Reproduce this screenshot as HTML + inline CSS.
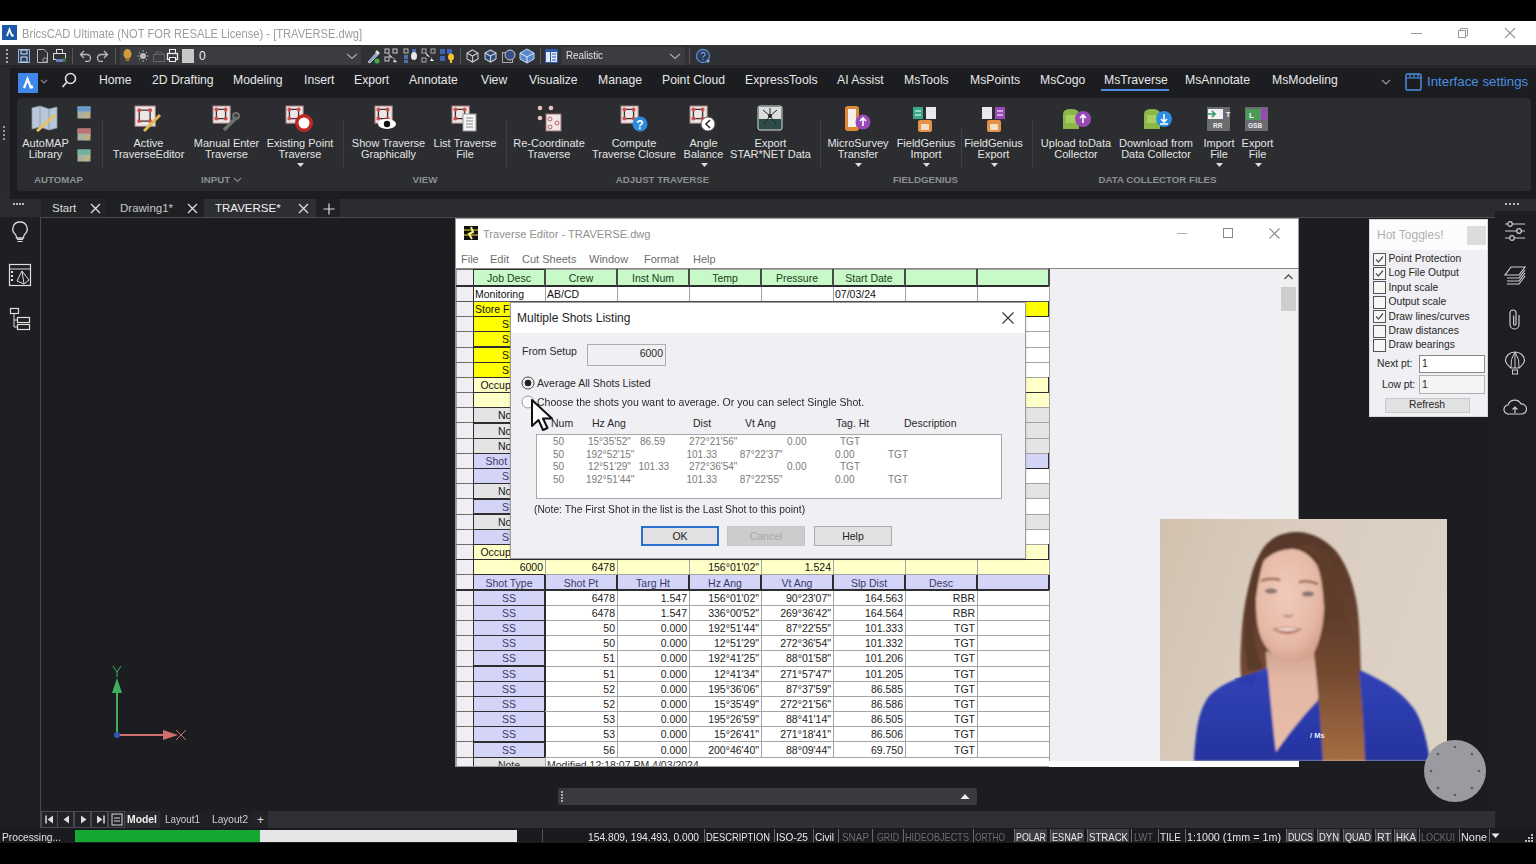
<!DOCTYPE html><html><head><meta charset="utf-8"><style>
*{margin:0;padding:0;box-sizing:border-box}
html,body{width:1536px;height:864px;overflow:hidden;background:#000;font-family:"Liberation Sans",sans-serif}
body>div,body>span,body>svg{position:absolute}
span{position:absolute;white-space:nowrap;line-height:1}
.g div,.g span{position:absolute}
</style></head><body><div style="left:0px;top:21px;width:1536px;height:24px;background:#ffffff;"></div>
<svg style="left:2px;top:25px" width="15" height="15" viewBox="0 0 15 15"><rect width="15" height="15" fill="#1b5aa6"/><path d="M5 11 L7.5 4.5 L10 11" stroke="#fff" stroke-width="1.8" fill="none"/><circle cx="10.5" cy="10.5" r="1.3" fill="#fff"/></svg>
<span style="left:22px;top:27.9px;font-size:12.3px;color:#9c9c9c;transform:scaleX(0.906);transform-origin:0 0;">BricsCAD Ultimate (NOT FOR RESALE License) - [TRAVERSE.dwg]</span>
<div style="left:1411px;top:33px;width:11px;height:1px;background:#999;"></div>
<svg style="left:1457px;top:27px" width="12" height="12" viewBox="0 0 12 12"><rect x="1.5" y="3.5" width="7" height="7" fill="none" stroke="#999"/><path d="M3.5 3.5 V1.5 H10.5 V8.5 H8.5" fill="none" stroke="#999"/></svg>
<svg style="left:1504px;top:27px" width="12" height="12" viewBox="0 0 12 12"><path d="M1 1 L11 11 M11 1 L1 11" stroke="#999" stroke-width="1.1"/></svg>
<div style="left:0px;top:45px;width:1536px;height:21px;background:#303134;"></div>
<div style="left:0px;top:65px;width:1536px;height:3px;background:#26272a;"></div>
<div style="left:6px;top:49px;width:2px;height:2px;background:#aaa;"></div>
<div style="left:6px;top:53px;width:2px;height:2px;background:#aaa;"></div>
<div style="left:6px;top:57px;width:2px;height:2px;background:#aaa;"></div>
<div style="left:6px;top:61px;width:2px;height:2px;background:#aaa;"></div>
<svg style="left:17px;top:48px" width="14" height="16" viewBox="0 0 14 16"><rect x="1.5" y="1.5" width="11" height="13" fill="#2a3f66" stroke="#8fb0e0"/><rect x="4" y="2" width="6" height="4" fill="none" stroke="#ddd"/><rect x="4" y="9" width="6" height="5" fill="none" stroke="#ddd"/></svg>
<svg style="left:36px;top:48px" width="13" height="16" viewBox="0 0 13 16"><path d="M1.5 1.5 H8 L11.5 5 V14.5 H1.5 Z" fill="none" stroke="#bbb"/><circle cx="9" cy="12" r="2.2" fill="none" stroke="#aaa"/></svg>
<svg style="left:52px;top:48px" width="15" height="16" viewBox="0 0 15 16"><rect x="4.5" y="1.5" width="6" height="4" fill="none" stroke="#ddd"/><rect x="1.5" y="5.5" width="12" height="6" fill="#333" stroke="#ddd"/><rect x="4" y="11" width="7" height="3" fill="#6a7fc0"/><rect x="11" y="10" width="3" height="4" fill="#3c6e3c"/></svg>
<div style="left:72px;top:48px;width:1px;height:16px;background:#555;"></div>
<svg style="left:79px;top:48px" width="13" height="14" viewBox="0 0 13 14"><path d="M5 3 L1.5 6.5 L5 10 M1.5 6.5 H8 A3.5 3.5 0 0 1 8 13.5 H6" fill="none" stroke="#bbb" stroke-width="1.3"/></svg>
<svg style="left:96px;top:48px" width="13" height="14" viewBox="0 0 13 14"><path d="M8 3 L11.5 6.5 L8 10 M11.5 6.5 H5 A3.5 3.5 0 0 0 5 13.5 H7" fill="none" stroke="#bbb" stroke-width="1.3"/></svg>
<div style="left:115px;top:48px;width:1px;height:16px;background:#555;"></div>
<div style="left:120px;top:47px;width:241px;height:18px;background:#3b3c40;"></div>
<svg style="left:121px;top:48px" width="13" height="16" viewBox="0 0 13 16"><ellipse cx="6.5" cy="6" rx="4" ry="5" fill="#d29a3c"/><rect x="4.5" y="10" width="4" height="3" fill="#a07030"/></svg>
<svg style="left:137px;top:48px" width="12" height="16" viewBox="0 0 12 16"><circle cx="6" cy="8" r="3" fill="#bbb"/><path d="M6 2 V4 M6 12 V14 M0.5 8 H2.5 M9.5 8 H11.5 M2 4 L3.3 5.3 M10 4 L8.7 5.3 M2 12 L3.3 10.7 M10 12 L8.7 10.7" stroke="#aaa"/></svg>
<svg style="left:152px;top:49px" width="14" height="14" viewBox="0 0 14 14"><rect x="1.5" y="5.5" width="11" height="7" fill="none" stroke="#666"/><path d="M4 5.5 V3 H10 V5.5" fill="none" stroke="#666"/></svg>
<svg style="left:166px;top:48px" width="13" height="16" viewBox="0 0 13 16"><rect x="3.5" y="1.5" width="6" height="4" fill="none" stroke="#eee"/><rect x="1.5" y="5.5" width="10" height="6" fill="none" stroke="#eee" stroke-width="1.3"/><rect x="3.5" y="9.5" width="6" height="4" fill="#303134" stroke="#eee"/></svg>
<div style="left:182px;top:49px;width:12px;height:14px;background:#c8c8c8;"></div>
<span style="left:199px;top:50.0px;font-size:12px;color:#eee;">0</span>
<svg style="left:346px;top:51px" width="12" height="10" viewBox="0 0 12 10"><path d="M1 3 L6 7.5 L11 3" fill="none" stroke="#aaa" stroke-width="1.2"/></svg>
<svg style="left:366px;top:48px" width="15" height="16" viewBox="0 0 15 16"><path d="M2 14 L10 5 L12 7 L4 15 Z" fill="#8a9ed8" stroke="#ccc" stroke-width="0.8"/><path d="M10 3 L13 6" stroke="#ddd" stroke-width="2.5"/><circle cx="11" cy="13" r="2.5" fill="#3fae4a"/></svg>
<svg style="left:384px;top:48px" width="15" height="16" viewBox="0 0 15 16"><rect x="1" y="1" width="4" height="4" fill="none" stroke="#ccc"/><rect x="9" y="1" width="4" height="4" fill="none" stroke="#ccc"/><path d="M4 5 L13 14 L9 14 L11 11 L6 9 Z" fill="#fff" stroke="#999" stroke-width="0.6"/><rect x="1" y="9" width="4" height="4" fill="none" stroke="#ccc"/></svg>
<svg style="left:403px;top:48px" width="15" height="16" viewBox="0 0 15 16"><rect x="1" y="1" width="4" height="4" fill="none" stroke="#bbb"/><rect x="1" y="7" width="4" height="4" fill="#4a6fb8"/><rect x="1" y="12" width="4" height="3" fill="#4a6fb8"/><ellipse cx="11" cy="8" rx="3" ry="4" fill="#e8e8e8"/><rect x="9" y="1" width="4" height="3" fill="#4a6fb8"/></svg>
<svg style="left:421px;top:48px" width="15" height="16" viewBox="0 0 15 16"><rect x="1" y="1" width="4" height="4" fill="none" stroke="#aaa"/><rect x="1" y="10" width="4" height="4" fill="none" stroke="#aaa"/><rect x="10" y="1" width="4" height="4" fill="none" stroke="#aaa"/><path d="M4 4 L13 13 L9 13 L11 10 L6 8 Z" fill="#fff"/></svg>
<svg style="left:439px;top:48px" width="16" height="16" viewBox="0 0 16 16"><rect x="1" y="1" width="5" height="5" fill="#3f66b5"/><rect x="1" y="8" width="5" height="5" fill="#3f66b5"/><rect x="8" y="1" width="5" height="5" fill="#3f66b5"/><ellipse cx="12" cy="9" rx="3" ry="3.5" fill="#f5c030"/><rect x="11" y="12" width="2" height="3" fill="#f5c030"/></svg>
<div style="left:460px;top:48px;width:1px;height:16px;background:#555;"></div>
<svg style="left:465px;top:48px" width="15" height="16" viewBox="0 0 15 16"><path d="M7.5 2 L13 5 V11 L7.5 14 L2 11 V5 Z M2 5 L7.5 8 L13 5 M7.5 8 V14" fill="none" stroke="#ccc" stroke-width="1.1"/></svg>
<svg style="left:483px;top:48px" width="15" height="16" viewBox="0 0 15 16"><path d="M7.5 2 L13 5 V11 L7.5 14 L2 11 V5 Z" fill="#2f4a80" stroke="#ccc" stroke-width="1.1"/><path d="M2 5 L7.5 8 L13 5 M7.5 8 V14" fill="none" stroke="#ccc" stroke-width="1.1"/></svg>
<svg style="left:501px;top:48px" width="16" height="16" viewBox="0 0 16 16"><rect x="1.5" y="4.5" width="10" height="10" fill="none" stroke="#aaa"/><circle cx="9" cy="7" r="5" fill="#36508a" stroke="#ccc"/></svg>
<svg style="left:519px;top:48px" width="16" height="16" viewBox="0 0 16 16"><path d="M8 1 L15 5 V11 L8 15 L1 11 V5 Z" fill="#5a86cc" stroke="#c8d8f0"/><path d="M1 5 L8 9 L15 5 M8 9 V15" fill="none" stroke="#e0e8ff"/></svg>
<div style="left:540px;top:48px;width:1px;height:16px;background:#555;"></div>
<svg style="left:544px;top:48px" width="15" height="16" viewBox="0 0 15 16"><rect x="1" y="1" width="13" height="14" fill="#2c5aa8"/><rect x="2" y="4" width="4" height="10" fill="#dfe8f5"/><rect x="7" y="4" width="6" height="10" fill="#dfe8f5"/><path d="M8 6 H12 M8 9 H12 M8 12 H12" stroke="#2c5aa8"/></svg>
<div style="left:562px;top:47px;width:123px;height:18px;background:#3b3c40;"></div>
<span style="left:566px;top:50.2px;font-size:11.5px;color:#e0e0e0;transform:scaleX(0.851);transform-origin:0 0;">Realistic</span>
<svg style="left:669px;top:51px" width="12" height="10" viewBox="0 0 12 10"><path d="M1 3 L6 7.5 L11 3" fill="none" stroke="#aaa" stroke-width="1.2"/></svg>
<div style="left:689px;top:48px;width:1px;height:16px;background:#555;"></div>
<svg style="left:695px;top:48px" width="16" height="16" viewBox="0 0 16 16"><circle cx="8" cy="8" r="6.5" fill="#2a3a5a" stroke="#5a8ad0" stroke-width="1.3"/><text x="8" y="12" font-size="10" text-anchor="middle" fill="#8ab0e8" font-family="Liberation Sans">?</text><circle cx="13" cy="13" r="1.6" fill="#8ab0e8"/></svg>
<div style="left:0px;top:68px;width:1536px;height:30px;background:#1c1d20;"></div>
<div style="left:0px;top:68px;width:10px;height:30px;background:#2a2b2e;"></div>
<svg style="left:18px;top:73px" width="20" height="20" viewBox="0 0 20 20"><rect width="20" height="20" fill="#3f87e8"/><path d="M6 15 L9.5 6 L13 15" stroke="#fff" stroke-width="2.2" fill="none"/><circle cx="13.5" cy="14" r="1.8" fill="#fff"/></svg>
<svg style="left:40px;top:79px" width="8" height="6" viewBox="0 0 8 6"><path d="M1 1 L4 4 L7 1" fill="none" stroke="#888" stroke-width="1.1"/></svg>
<svg style="left:61px;top:72px" width="16" height="17" viewBox="0 0 16 17"><circle cx="9.5" cy="6.5" r="5" fill="none" stroke="#ddd" stroke-width="1.6"/><path d="M6 10 L1.5 15" stroke="#ddd" stroke-width="1.8"/></svg>
<span style="left:99px;top:73.9px;font-size:12.2px;color:#e6e6e6;">Home</span>
<span style="left:152px;top:73.9px;font-size:12.2px;color:#e6e6e6;">2D Drafting</span>
<span style="left:233px;top:73.9px;font-size:12.2px;color:#e6e6e6;">Modeling</span>
<span style="left:304px;top:73.9px;font-size:12.2px;color:#e6e6e6;">Insert</span>
<span style="left:354px;top:73.9px;font-size:12.2px;color:#e6e6e6;">Export</span>
<span style="left:409px;top:73.9px;font-size:12.2px;color:#e6e6e6;">Annotate</span>
<span style="left:481px;top:73.9px;font-size:12.2px;color:#e6e6e6;">View</span>
<span style="left:529px;top:73.9px;font-size:12.2px;color:#e6e6e6;">Visualize</span>
<span style="left:598px;top:73.9px;font-size:12.2px;color:#e6e6e6;">Manage</span>
<span style="left:662px;top:73.9px;font-size:12.2px;color:#e6e6e6;">Point Cloud</span>
<span style="left:745px;top:73.9px;font-size:12.2px;color:#e6e6e6;">ExpressTools</span>
<span style="left:837px;top:73.9px;font-size:12.2px;color:#e6e6e6;">AI Assist</span>
<span style="left:904px;top:73.9px;font-size:12.2px;color:#e6e6e6;">MsTools</span>
<span style="left:970px;top:73.9px;font-size:12.2px;color:#e6e6e6;">MsPoints</span>
<span style="left:1040px;top:73.9px;font-size:12.2px;color:#e6e6e6;">MsCogo</span>
<span style="left:1104px;top:73.9px;font-size:12.2px;color:#e6e6e6;">MsTraverse</span>
<span style="left:1185px;top:73.9px;font-size:12.2px;color:#e6e6e6;">MsAnnotate</span>
<span style="left:1272px;top:73.9px;font-size:12.2px;color:#e6e6e6;">MsModeling</span>
<div style="left:1101px;top:89px;width:68px;height:2px;background:#4a90e2;"></div>
<svg style="left:1381px;top:79px" width="10" height="7" viewBox="0 0 10 7"><path d="M1 1 L5 5 L9 1" fill="none" stroke="#999" stroke-width="1.2"/></svg>
<svg style="left:1405px;top:73px" width="17" height="18" viewBox="0 0 17 18"><rect x="1" y="1" width="15" height="16" rx="1.5" fill="none" stroke="#4a8fe0" stroke-width="1.5"/><path d="M1 5 H16 M5 1 V5 M9 1 V5 M13 1 V5" stroke="#4a8fe0" stroke-width="1.2"/></svg>
<span style="left:1427px;top:75.3px;font-size:13.3px;color:#4a8fe0;">Interface settings</span>
<div style="left:0px;top:98px;width:1536px;height:102px;background:#1c1d20;"></div>
<div style="left:0px;top:98px;width:10px;height:102px;background:#2a2b2e;"></div>
<div style="left:3px;top:126px;width:2px;height:2px;background:#999;"></div>
<div style="left:3px;top:130px;width:2px;height:2px;background:#999;"></div>
<div style="left:3px;top:134px;width:2px;height:2px;background:#999;"></div>
<div style="left:3px;top:138px;width:2px;height:2px;background:#999;"></div>
<div style="left:17px;top:98px;width:1514px;height:93px;background:#2b2d30;border-radius:4px;"></div>
<svg style="left:31px;top:105px" width="28" height="27" viewBox="0 0 28 27"><path d="M1 3 L9 1 L18 4 L26 2 V23 L18 25 L9 22 L1 24 Z" fill="#b8c8d8" stroke="#8898a8" stroke-width="0.8"/><path d="M9 1 V22 M18 4 V25" stroke="#8aa0b8"/><path d="M6 26 L24 10" stroke="#e8c060" stroke-width="3"/></svg>
<span style="left:-154.5px;width:400px;text-align:center;top:137.5px;font-size:11px;color:#e4e4e4;">AutoMAP</span>
<span style="left:-154.5px;width:400px;text-align:center;top:148.5px;font-size:11px;color:#e4e4e4;">Library</span>
<svg style="left:77px;top:106px" width="14" height="13" viewBox="0 0 14 13"><rect x="0.5" y="0.5" width="13" height="12" fill="#a8b0a0"/><rect x="0.5" y="0.5" width="13" height="5" fill="#6a9ad0"/><path d="M8 12 L13 7" stroke="#d8b060" stroke-width="2"/></svg>
<svg style="left:77px;top:128px" width="14" height="13" viewBox="0 0 14 13"><rect x="0.5" y="0.5" width="13" height="12" fill="#a8b0a0"/><rect x="0.5" y="0.5" width="13" height="5" fill="#c07070"/><path d="M8 12 L13 7" stroke="#d8b060" stroke-width="2"/></svg>
<svg style="left:77px;top:149px" width="14" height="13" viewBox="0 0 14 13"><rect x="0.5" y="0.5" width="13" height="12" fill="#a8b0a0"/><rect x="0.5" y="0.5" width="13" height="5" fill="#70b0a0"/><path d="M8 12 L13 7" stroke="#d8b060" stroke-width="2"/></svg>
<div style="left:102px;top:120px;width:1px;height:48px;background:#3d3f43;"></div>
<svg style="left:134px;top:105px" width="28" height="28" viewBox="0 0 28 28"><rect x="1" y="1" width="20.3" height="20.3" fill="#ece6e6" stroke="#a98080" stroke-width="1"/><rect x="5.2" y="5.2" width="10.9" height="10.9" rx="2" fill="none" stroke="#3a3030" stroke-width="1.3"/><circle cx="5.2" cy="5.2" r="2" fill="#d05050"/><circle cx="16.1" cy="5.2" r="2" fill="#d05050"/><circle cx="5.2" cy="16.1" r="2" fill="#d05050"/><circle cx="16.1" cy="16.1" r="2" fill="#d05050"/><path d="M10 26 L26 10" stroke="#e0b850" stroke-width="3"/></svg>
<span style="left:-51.5px;width:400px;text-align:center;top:137.5px;font-size:11px;color:#e4e4e4;">Active</span>
<span style="left:-51.5px;width:400px;text-align:center;top:148.5px;font-size:11px;color:#e4e4e4;">TraverseEditor</span>
<svg style="left:212px;top:105px" width="28" height="28" viewBox="0 0 28 28"><rect x="1" y="1" width="17.2" height="17.2" fill="#ece6e6" stroke="#a98080" stroke-width="1"/><rect x="4.4" y="4.4" width="9.2" height="9.2" rx="2" fill="none" stroke="#3a3030" stroke-width="1.3"/><circle cx="4.4" cy="4.4" r="2" fill="#d05050"/><circle cx="13.6" cy="4.4" r="2" fill="#d05050"/><circle cx="4.4" cy="13.6" r="2" fill="#d05050"/><circle cx="13.6" cy="13.6" r="2" fill="#d05050"/><path d="M12 25 L25 12" stroke="#707070" stroke-width="3.5"/><circle cx="24" cy="11" r="3" fill="none" stroke="#707070" stroke-width="2"/></svg>
<span style="left:26.5px;width:400px;text-align:center;top:137.5px;font-size:11px;color:#e4e4e4;">Manual Enter</span>
<span style="left:26.5px;width:400px;text-align:center;top:148.5px;font-size:11px;color:#e4e4e4;">Traverse</span>
<svg style="left:285px;top:105px" width="30" height="30" viewBox="0 0 30 30"><rect x="1" y="1" width="17.2" height="17.2" fill="#ece6e6" stroke="#a98080" stroke-width="1"/><rect x="4.4" y="4.4" width="9.2" height="9.2" rx="2" fill="none" stroke="#3a3030" stroke-width="1.3"/><circle cx="4.4" cy="4.4" r="2" fill="#d05050"/><circle cx="13.6" cy="4.4" r="2" fill="#d05050"/><circle cx="4.4" cy="13.6" r="2" fill="#d05050"/><circle cx="13.6" cy="13.6" r="2" fill="#d05050"/><circle cx="19" cy="18" r="9" fill="#c02820"/><circle cx="19" cy="18" r="5.5" fill="#fff"/></svg>
<span style="left:100px;width:400px;text-align:center;top:137.5px;font-size:11px;color:#e4e4e4;">Existing Point</span>
<span style="left:100px;width:400px;text-align:center;top:148.5px;font-size:11px;color:#e4e4e4;">Traverse</span>
<svg style="left:297px;top:163px" width="7" height="5" viewBox="0 0 7 5"><path d="M0 0 H7 L3.5 4 Z" fill="#ddd"/></svg>
<div style="left:343px;top:120px;width:1px;height:48px;background:#3d3f43;"></div>
<svg style="left:374px;top:105px" width="26" height="27" viewBox="0 0 26 27"><rect x="1" y="1" width="17.2" height="17.2" fill="#ece6e6" stroke="#a98080" stroke-width="1"/><rect x="4.4" y="4.4" width="9.2" height="9.2" rx="2" fill="none" stroke="#3a3030" stroke-width="1.3"/><circle cx="4.4" cy="4.4" r="2" fill="#d05050"/><circle cx="13.6" cy="4.4" r="2" fill="#d05050"/><circle cx="4.4" cy="13.6" r="2" fill="#d05050"/><circle cx="13.6" cy="13.6" r="2" fill="#d05050"/><ellipse cx="13" cy="19" rx="9" ry="5" fill="#fff"/><circle cx="13" cy="19" r="3.2" fill="#111"/></svg>
<span style="left:188.5px;width:400px;text-align:center;top:137.5px;font-size:11px;color:#e4e4e4;">Show Traverse</span>
<span style="left:188.5px;width:400px;text-align:center;top:148.5px;font-size:11px;color:#e4e4e4;">Graphically</span>
<svg style="left:451px;top:105px" width="28" height="28" viewBox="0 0 28 28"><rect x="1" y="1" width="17.2" height="17.2" fill="#ece6e6" stroke="#a98080" stroke-width="1"/><rect x="4.4" y="4.4" width="9.2" height="9.2" rx="2" fill="none" stroke="#3a3030" stroke-width="1.3"/><circle cx="4.4" cy="4.4" r="2" fill="#d05050"/><circle cx="13.6" cy="4.4" r="2" fill="#d05050"/><circle cx="4.4" cy="13.6" r="2" fill="#d05050"/><circle cx="13.6" cy="13.6" r="2" fill="#d05050"/><rect x="12" y="9" width="13" height="17" fill="#f4f4f4" stroke="#999"/><path d="M15 13 H22 M15 16 H22 M15 19 H22 M15 22 H22" stroke="#888"/></svg>
<span style="left:265px;width:400px;text-align:center;top:137.5px;font-size:11px;color:#e4e4e4;">List Traverse</span>
<span style="left:265px;width:400px;text-align:center;top:148.5px;font-size:11px;color:#e4e4e4;">File</span>
<div style="left:506px;top:120px;width:1px;height:48px;background:#3d3f43;"></div>
<svg style="left:536px;top:105px" width="28" height="28" viewBox="0 0 28 28"><circle cx="4" cy="3" r="2.3" fill="#f0c0c0"/><circle cx="15" cy="3" r="2.3" fill="#f0c0c0"/><circle cx="4" cy="13" r="2.3" fill="#f0c0c0"/><rect x="10" y="9" width="15" height="17" fill="#f0e8e8" stroke="#a07070"/><circle cx="14" cy="14" r="2" fill="none" stroke="#c06060"/><circle cx="21" cy="18" r="2" fill="none" stroke="#c06060"/><circle cx="14" cy="22" r="2" fill="none" stroke="#c06060"/></svg>
<span style="left:349px;width:400px;text-align:center;top:137.5px;font-size:11px;color:#e4e4e4;">Re-Coordinate</span>
<span style="left:349px;width:400px;text-align:center;top:148.5px;font-size:11px;color:#e4e4e4;">Traverse</span>
<svg style="left:620px;top:105px" width="30" height="30" viewBox="0 0 30 30"><rect x="1" y="1" width="17.2" height="17.2" fill="#ece6e6" stroke="#a98080" stroke-width="1"/><rect x="4.4" y="4.4" width="9.2" height="9.2" rx="2" fill="none" stroke="#3a3030" stroke-width="1.3"/><circle cx="4.4" cy="4.4" r="2" fill="#d05050"/><circle cx="13.6" cy="4.4" r="2" fill="#d05050"/><circle cx="4.4" cy="13.6" r="2" fill="#d05050"/><circle cx="13.6" cy="13.6" r="2" fill="#d05050"/><circle cx="20" cy="19" r="7.5" fill="#2c8ce0"/><text x="20" y="23.5" font-size="12" font-weight="bold" text-anchor="middle" fill="#fff" font-family="Liberation Sans">?</text></svg>
<span style="left:434px;width:400px;text-align:center;top:137.5px;font-size:11px;color:#e4e4e4;">Compute</span>
<span style="left:434px;width:400px;text-align:center;top:148.5px;font-size:11px;color:#e4e4e4;">Traverse Closure</span>
<svg style="left:689px;top:105px" width="30" height="30" viewBox="0 0 30 30"><rect x="1" y="1" width="17.2" height="17.2" fill="#ece6e6" stroke="#a98080" stroke-width="1"/><rect x="4.4" y="4.4" width="9.2" height="9.2" rx="2" fill="none" stroke="#3a3030" stroke-width="1.3"/><circle cx="4.4" cy="4.4" r="2" fill="#d05050"/><circle cx="13.6" cy="4.4" r="2" fill="#d05050"/><circle cx="4.4" cy="13.6" r="2" fill="#d05050"/><circle cx="13.6" cy="13.6" r="2" fill="#d05050"/><circle cx="19" cy="19" r="7" fill="#fff" stroke="#555"/><path d="M21 15 L17 19 L21 23" fill="none" stroke="#333" stroke-width="1.6"/></svg>
<span style="left:503.5px;width:400px;text-align:center;top:137.5px;font-size:11px;color:#e4e4e4;">Angle</span>
<span style="left:503.5px;width:400px;text-align:center;top:148.5px;font-size:11px;color:#e4e4e4;">Balance</span>
<svg style="left:700.5px;top:163px" width="7" height="5" viewBox="0 0 7 5"><path d="M0 0 H7 L3.5 4 Z" fill="#ddd"/></svg>
<svg style="left:757px;top:105px" width="27" height="27" viewBox="0 0 27 27"><rect x="1" y="1" width="24" height="24" rx="2" fill="#2c4a48" stroke="#ddd"/><rect x="2" y="2" width="22" height="12" fill="#ddd"/><circle cx="13" cy="11" r="2" fill="#222"/><path d="M13 11 L6 5 M13 11 L20 5 M13 11 L7 19 M13 11 L19 19 M13 11 V3" stroke="#222"/></svg>
<span style="left:570.5px;width:400px;text-align:center;top:137.5px;font-size:11px;color:#e4e4e4;">Export</span>
<span style="left:570.5px;width:400px;text-align:center;top:148.5px;font-size:11px;color:#e4e4e4;">STAR*NET Data</span>
<div style="left:820px;top:120px;width:1px;height:48px;background:#3d3f43;"></div>
<svg style="left:842px;top:105px" width="30" height="28" viewBox="0 0 30 28"><rect x="3" y="1" width="14" height="25" rx="3" fill="#e0883a"/><rect x="6" y="4" width="8" height="18" fill="#f6f0ea"/><circle cx="21" cy="17" r="7.5" fill="#9a4ab8"/><path d="M21 21 V13 M18 16 L21 13 L24 16" stroke="#fff" stroke-width="1.6" fill="none"/></svg>
<span style="left:658px;width:400px;text-align:center;top:137.5px;font-size:11px;color:#e4e4e4;">MicroSurvey</span>
<span style="left:658px;width:400px;text-align:center;top:148.5px;font-size:11px;color:#e4e4e4;">Transfer</span>
<svg style="left:855px;top:163px" width="7" height="5" viewBox="0 0 7 5"><path d="M0 0 H7 L3.5 4 Z" fill="#ddd"/></svg>
<svg style="left:912px;top:105px" width="26" height="28" viewBox="0 0 26 28"><rect x="1" y="2" width="10" height="12" fill="#3aa888"/><path d="M3 6 H9 M3 10 H9" stroke="#fff"/><rect x="14" y="2" width="10" height="12" fill="#e8e8f0"/><rect x="6" y="15" width="14" height="12" rx="2" fill="#e89048"/><rect x="9" y="19" width="8" height="6" fill="#f4e0c8"/></svg>
<span style="left:726px;width:400px;text-align:center;top:137.5px;font-size:11px;color:#e4e4e4;">FieldGenius</span>
<span style="left:726px;width:400px;text-align:center;top:148.5px;font-size:11px;color:#e4e4e4;">Import</span>
<svg style="left:923px;top:163px" width="7" height="5" viewBox="0 0 7 5"><path d="M0 0 H7 L3.5 4 Z" fill="#ddd"/></svg>
<div style="left:961px;top:128px;width:1px;height:40px;background:#3d3f43;"></div>
<svg style="left:981px;top:105px" width="26" height="28" viewBox="0 0 26 28"><rect x="1" y="2" width="10" height="12" fill="#e8e8f0"/><rect x="14" y="2" width="10" height="12" fill="#9a4ab8"/><path d="M16 6 H22 M16 10 H22" stroke="#fff"/><rect x="6" y="15" width="14" height="12" rx="2" fill="#e89048"/><rect x="9" y="19" width="8" height="6" fill="#f4e0c8"/></svg>
<span style="left:793.5px;width:400px;text-align:center;top:137.5px;font-size:11px;color:#e4e4e4;">FieldGenius</span>
<span style="left:793.5px;width:400px;text-align:center;top:148.5px;font-size:11px;color:#e4e4e4;">Export</span>
<svg style="left:990.5px;top:163px" width="7" height="5" viewBox="0 0 7 5"><path d="M0 0 H7 L3.5 4 Z" fill="#ddd"/></svg>
<div style="left:1032px;top:120px;width:1px;height:48px;background:#3d3f43;"></div>
<svg style="left:1061px;top:106px" width="30" height="26" viewBox="0 0 30 26"><path d="M2 8 Q2 3 10 3 Q18 3 18 8 V23 H2 Z" fill="#8ab848"/><rect x="5" y="9" width="10" height="8" fill="#a8d060"/><circle cx="22" cy="13" r="8" fill="#9a4ab8"/><path d="M22 17 V9 M19 12 L22 9 L25 12" stroke="#fff" stroke-width="1.6" fill="none"/></svg>
<span style="left:876px;width:400px;text-align:center;top:137.5px;font-size:11px;color:#e4e4e4;">Upload toData</span>
<span style="left:876px;width:400px;text-align:center;top:148.5px;font-size:11px;color:#e4e4e4;">Collector</span>
<svg style="left:1142px;top:106px" width="30" height="26" viewBox="0 0 30 26"><path d="M2 8 Q2 3 10 3 Q18 3 18 8 V23 H2 Z" fill="#8ab848"/><rect x="5" y="9" width="10" height="8" fill="#a8d060"/><circle cx="22" cy="13" r="8" fill="#2c8ce0"/><path d="M22 8 V16 M19 13 L22 16 L25 13 M18 18 H26" stroke="#fff" stroke-width="1.6" fill="none"/></svg>
<span style="left:956px;width:400px;text-align:center;top:137.5px;font-size:11px;color:#e4e4e4;">Download from</span>
<span style="left:956px;width:400px;text-align:center;top:148.5px;font-size:11px;color:#e4e4e4;">Data Collector</span>
<svg style="left:1206px;top:106px" width="26" height="26" viewBox="0 0 26 26"><rect x="1" y="1" width="23" height="24" fill="#6a6c70"/><rect x="2" y="3" width="15" height="10" fill="#f0f0f0"/><path d="M2 8 H9 M6 5 L9 8 L6 11" stroke="#2a9a70" stroke-width="1.6" fill="none"/><text x="20" y="11" font-size="7" fill="#fff" font-family="Liberation Sans" font-weight="bold">T</text><text x="7" y="22" font-size="6.5" fill="#eee" font-family="Liberation Sans" font-weight="bold">RR</text></svg>
<span style="left:1019px;width:400px;text-align:center;top:137.5px;font-size:11px;color:#e4e4e4;">Import</span>
<span style="left:1019px;width:400px;text-align:center;top:148.5px;font-size:11px;color:#e4e4e4;">File</span>
<svg style="left:1216px;top:163px" width="7" height="5" viewBox="0 0 7 5"><path d="M0 0 H7 L3.5 4 Z" fill="#ddd"/></svg>
<svg style="left:1244px;top:106px" width="26" height="26" viewBox="0 0 26 26"><rect x="1" y="1" width="23" height="24" fill="#6a6c70"/><rect x="2" y="3" width="15" height="11" fill="#4a9a58"/><text x="5" y="12" font-size="8" fill="#fff" font-family="Liberation Sans" font-weight="bold">L</text><rect x="17" y="3" width="6" height="11" fill="#9a4ab8"/><text x="4" y="22" font-size="6.5" fill="#eee" font-family="Liberation Sans" font-weight="bold">GSB</text></svg>
<span style="left:1057.5px;width:400px;text-align:center;top:137.5px;font-size:11px;color:#e4e4e4;">Export</span>
<span style="left:1057.5px;width:400px;text-align:center;top:148.5px;font-size:11px;color:#e4e4e4;">File</span>
<svg style="left:1254.5px;top:163px" width="7" height="5" viewBox="0 0 7 5"><path d="M0 0 H7 L3.5 4 Z" fill="#ddd"/></svg>
<span style="left:-141.5px;width:400px;text-align:center;top:175.2px;font-size:9.7px;color:#8d8f93;font-weight:bold">AUTOMAP</span>
<span style="left:201px;top:175.2px;font-size:9.7px;color:#8d8f93;font-weight:bold">INPUT</span>
<svg style="left:233px;top:177px" width="9" height="6" viewBox="0 0 9 6"><path d="M1 1 L4.5 4.5 L8 1" fill="none" stroke="#888" stroke-width="1.1"/></svg>
<span style="left:225px;width:400px;text-align:center;top:175.2px;font-size:9.7px;color:#8d8f93;font-weight:bold">VIEW</span>
<span style="left:462.5px;width:400px;text-align:center;top:175.2px;font-size:9.7px;color:#8d8f93;font-weight:bold">ADJUST TRAVERSE</span>
<span style="left:725.5px;width:400px;text-align:center;top:175.2px;font-size:9.7px;color:#8d8f93;font-weight:bold">FIELDGENIUS</span>
<span style="left:957.5px;width:400px;text-align:center;top:175.2px;font-size:9.7px;color:#8d8f93;font-weight:bold">DATA COLLECTOR FILES</span>
<div style="left:0px;top:199px;width:1536px;height:19px;background:#2b2c2f;"></div>
<div style="left:13px;top:203px;width:2px;height:2px;background:#bbb;"></div>
<div style="left:16px;top:203px;width:2px;height:2px;background:#bbb;"></div>
<div style="left:19px;top:203px;width:2px;height:2px;background:#bbb;"></div>
<div style="left:22px;top:203px;width:2px;height:2px;background:#bbb;"></div>
<div style="left:41px;top:199px;width:64px;height:18px;background:#232427;"></div>
<div style="left:105px;top:199px;width:99px;height:18px;background:#1f2023;"></div>
<div style="left:204px;top:199px;width:112px;height:18px;background:#2e2f33;"></div>
<div style="left:316px;top:199px;width:24px;height:18px;background:#202124;"></div>
<span style="left:52px;top:203.2px;font-size:11.5px;color:#dcdcdc;">Start</span>
<span style="left:120px;top:203.2px;font-size:11.5px;color:#c8c8c8;">Drawing1*</span>
<span style="left:215px;top:203.2px;font-size:11.5px;color:#f2f2f2;">TRAVERSE*</span>
<svg style="left:90px;top:203px" width="11" height="11" viewBox="0 0 11 11"><path d="M1 1 L10 10 M10 1 L1 10" stroke="#ddd" stroke-width="1.3"/></svg>
<svg style="left:187px;top:203px" width="11" height="11" viewBox="0 0 11 11"><path d="M1 1 L10 10 M10 1 L1 10" stroke="#ddd" stroke-width="1.3"/></svg>
<svg style="left:298px;top:203px" width="11" height="11" viewBox="0 0 11 11"><path d="M1 1 L10 10 M10 1 L1 10" stroke="#ddd" stroke-width="1.3"/></svg>
<svg style="left:323px;top:203px" width="12" height="12" viewBox="0 0 12 12"><path d="M6 0.5 V11.5 M0.5 6 H11.5" stroke="#ddd" stroke-width="1.2"/></svg>
<div style="left:0px;top:217px;width:1536px;height:611px;background:#1c1d21;"></div>
<div style="left:0px;top:217px;width:40px;height:611px;background:#1e1f22;"></div>
<div style="left:40px;top:217px;width:1455px;height:1px;background:#4a4b4f;"></div>
<div style="left:40px;top:217px;width:1px;height:611px;background:#4a4b4f;"></div>
<div style="left:1495px;top:211px;width:41px;height:617px;background:#1d1e21;"></div>
<div style="left:1505px;top:203px;width:2px;height:2px;background:#bbb;"></div>
<div style="left:1509px;top:203px;width:2px;height:2px;background:#bbb;"></div>
<div style="left:1513px;top:203px;width:2px;height:2px;background:#bbb;"></div>
<div style="left:1517px;top:203px;width:2px;height:2px;background:#bbb;"></div>
<svg style="left:10px;top:220px" width="20" height="24" viewBox="0 0 20 24"><path d="M10 2 A7 7 0 0 0 5.5 14.5 Q6.5 16 6.5 18 H13.5 Q13.5 16 14.5 14.5 A7 7 0 0 0 10 2 Z" fill="none" stroke="#ddd" stroke-width="1.3"/><path d="M7 19.5 H13 M7.5 21.5 H12.5" stroke="#ddd" stroke-width="1.2"/></svg>
<svg style="left:8px;top:263px" width="24" height="24" viewBox="0 0 24 24"><rect x="1.5" y="1.5" width="21" height="21" fill="none" stroke="#ddd" stroke-width="1.2"/><path d="M1.5 6 H22.5" stroke="#ddd"/><rect x="3" y="8" width="2" height="2" fill="#ddd"/><rect x="3" y="12" width="2" height="2" fill="#ddd"/><rect x="3" y="16" width="2" height="2" fill="#ddd"/><path d="M14 8 L21 17 L16 21 L9 18 Z M14 8 L16 21" fill="none" stroke="#ddd"/></svg>
<svg style="left:9px;top:307px" width="22" height="24" viewBox="0 0 22 24"><rect x="1.5" y="1.5" width="8" height="5" fill="none" stroke="#ddd" stroke-width="1.2"/><rect x="8.5" y="10.5" width="12" height="5" fill="none" stroke="#ddd" stroke-width="1.2"/><rect x="8.5" y="17.5" width="12" height="5" fill="none" stroke="#ddd" stroke-width="1.2"/><path d="M5 6.5 V20 H8.5 M5 13 H8.5" fill="none" stroke="#ddd"/></svg>
<svg style="left:1504px;top:221px" width="22" height="20" viewBox="0 0 22 20"><path d="M1 3 H21 M1 10 H21 M1 17 H21" stroke="#ccc" stroke-width="1.2"/><circle cx="6" cy="3" r="2.3" fill="#1d1e21" stroke="#ccc" stroke-width="1.2"/><circle cx="15" cy="10" r="2.3" fill="#1d1e21" stroke="#ccc" stroke-width="1.2"/><circle cx="8" cy="17" r="2.3" fill="#1d1e21" stroke="#ccc" stroke-width="1.2"/></svg>
<svg style="left:1504px;top:265px" width="22" height="22" viewBox="0 0 22 22"><path d="M7 2 H21 L15 10 H1 Z" fill="none" stroke="#ccc" stroke-width="1.2"/><path d="M3 13 H15 L21 5 M3 16 H15 L21 8 M3 19 H15 L21 11" fill="none" stroke="#ccc" stroke-width="1.2"/></svg>
<svg style="left:1507px;top:307px" width="16" height="24" viewBox="0 0 16 24"><path d="M12 8 V17.5 A4.5 4.5 0 0 1 3 17.5 V6 A3 3 0 0 1 9 6 V17 A1.2 1.2 0 0 1 6.6 17 V8.5" fill="none" stroke="#ccc" stroke-width="1.2"/></svg>
<svg style="left:1504px;top:351px" width="22" height="24" viewBox="0 0 22 24"><path d="M11 1 A9.5 8.5 0 0 0 1.5 9.5 Q2 13 7 17 H15 Q20 13 20.5 9.5 A9.5 8.5 0 0 0 11 1 Z" fill="none" stroke="#ccc" stroke-width="1.2"/><path d="M11 1 Q6 8 7 17 M11 1 Q16 8 15 17 M11 1 V17" fill="none" stroke="#ccc"/><rect x="8.5" y="19" width="5" height="4" fill="none" stroke="#ccc"/></svg>
<svg style="left:1503px;top:398px" width="24" height="18" viewBox="0 0 24 18"><path d="M6 16 A4.5 4.5 0 0 1 5 7 A7 7 0 0 1 18 6 A5 5 0 0 1 19 16 Z" fill="none" stroke="#ccc" stroke-width="1.2"/><path d="M12 15 V9 M9.5 11.5 L12 9 L14.5 11.5" fill="none" stroke="#ccc" stroke-width="1.2"/></svg>
<svg style="left:105px;top:660px" width="90" height="85" viewBox="0 0 90 85"><path d="M12 75 V22" stroke="#3fb060" stroke-width="2"/><path d="M7 33 L12 18 L17 33 Z" fill="#3fb060"/><path d="M12 75 H68" stroke="#d07070" stroke-width="2"/><path d="M58 70 L73 75 L58 80 Z" fill="#d07070"/><circle cx="12" cy="75" r="3" fill="#2a5ab0"/><path d="M8 6 L12 12 L16 6 M12 12 V17" stroke="#3fb060" stroke-width="1" fill="none"/><path d="M71 70 L81 80 M81 70 L71 80" stroke="#d07070" stroke-width="1"/></svg>
<div style="left:41px;top:811px;width:1454px;height:17px;background:#2f3033;"></div>
<div style="left:41px;top:811px;width:17px;height:17px;background:#222326;border:1px solid #4a4b4f;"></div>
<div style="left:57px;top:811px;width:17px;height:17px;background:#222326;border:1px solid #4a4b4f;"></div>
<div style="left:74px;top:811px;width:17px;height:17px;background:#222326;border:1px solid #4a4b4f;"></div>
<div style="left:91px;top:811px;width:17px;height:17px;background:#222326;border:1px solid #4a4b4f;"></div>
<div style="left:108px;top:811px;width:17px;height:17px;background:#222326;border:1px solid #4a4b4f;"></div>
<svg style="left:44px;top:814px" width="11" height="11" viewBox="0 0 11 11"><path d="M2 1.5 V9.5" stroke="#ddd" stroke-width="1.5"/><path d="M9 1.5 L3.5 5.5 L9 9.5 Z" fill="#ddd"/></svg>
<svg style="left:61px;top:814px" width="11" height="11" viewBox="0 0 11 11"><path d="M8 1.5 L2.5 5.5 L8 9.5 Z" fill="#ddd"/></svg>
<svg style="left:78px;top:814px" width="11" height="11" viewBox="0 0 11 11"><path d="M3 1.5 L8.5 5.5 L3 9.5 Z" fill="#ddd"/></svg>
<svg style="left:95px;top:814px" width="11" height="11" viewBox="0 0 11 11"><path d="M9 1.5 V9.5" stroke="#ddd" stroke-width="1.5"/><path d="M2 1.5 L7.5 5.5 L2 9.5 Z" fill="#ddd"/></svg>
<svg style="left:111px;top:813px" width="12" height="13" viewBox="0 0 12 13"><rect x="1" y="1" width="10" height="11" fill="none" stroke="#ddd"/><path d="M3 5 H9 M3 8 H9" stroke="#ddd"/></svg>
<div style="left:125px;top:811px;width:35px;height:17px;background:#2a2b2e;"></div>
<div style="left:160px;top:811px;width:47px;height:17px;background:#1f2024;"></div>
<div style="left:207px;top:811px;width:46px;height:17px;background:#1f2024;"></div>
<div style="left:253px;top:811px;width:15px;height:17px;background:#222326;"></div>
<span style="left:127px;top:813.8px;font-size:11.5px;color:#f0f0f0;font-weight:bold;transform:scaleX(0.903);transform-origin:0 0;">Model</span>
<span style="left:165px;top:813.8px;font-size:11.5px;color:#d0d0d0;transform:scaleX(0.855);transform-origin:0 0;">Layout1</span>
<span style="left:212px;top:813.8px;font-size:11.5px;color:#d0d0d0;transform:scaleX(0.880);transform-origin:0 0;">Layout2</span>
<span style="left:257px;top:813.5px;font-size:12px;color:#ddd;">+</span>
<div style="left:558px;top:788px;width:419px;height:17px;background:#393a3d;border-radius:2px;"></div>
<div style="left:561px;top:791px;width:2px;height:2px;background:#aaa;"></div>
<div style="left:561px;top:794px;width:2px;height:2px;background:#aaa;"></div>
<div style="left:561px;top:797px;width:2px;height:2px;background:#aaa;"></div>
<div style="left:561px;top:800px;width:2px;height:2px;background:#aaa;"></div>
<svg style="left:960px;top:792px" width="10" height="8" viewBox="0 0 10 8"><path d="M0.5 7 L5 2 L9.5 7 Z" fill="#eee"/></svg>
<div style="left:0px;top:828px;width:1536px;height:15px;background:#1a1b1e;"></div>
<div style="left:0px;top:843px;width:1536px;height:21px;background:#000;"></div>
<span style="left:2px;top:831.5px;font-size:11px;color:#e0e0e0;transform:scaleX(0.928);transform-origin:0 0;">Processing...</span>
<div style="left:75px;top:830px;width:442px;height:12px;background:#e6e6e6;"></div>
<div style="left:75px;top:830px;width:185px;height:12px;background:#15a832;"></div>
<div style="left:542px;top:829px;width:1px;height:13px;background:#555;"></div>
<div style="left:704px;top:829px;width:1px;height:13px;background:#6a6a6e;"></div>
<div style="left:774px;top:829px;width:1px;height:13px;background:#6a6a6e;"></div>
<div style="left:813px;top:829px;width:1px;height:13px;background:#6a6a6e;"></div>
<div style="left:838px;top:829px;width:1px;height:13px;background:#6a6a6e;"></div>
<div style="left:872px;top:829px;width:1px;height:13px;background:#6a6a6e;"></div>
<div style="left:903px;top:829px;width:1px;height:13px;background:#6a6a6e;"></div>
<div style="left:973px;top:829px;width:1px;height:13px;background:#6a6a6e;"></div>
<div style="left:1014px;top:829px;width:1px;height:13px;background:#6a6a6e;"></div>
<div style="left:1050px;top:829px;width:1px;height:13px;background:#6a6a6e;"></div>
<div style="left:1087px;top:829px;width:1px;height:13px;background:#6a6a6e;"></div>
<div style="left:1131px;top:829px;width:1px;height:13px;background:#6a6a6e;"></div>
<div style="left:1158px;top:829px;width:1px;height:13px;background:#6a6a6e;"></div>
<div style="left:1185px;top:829px;width:1px;height:13px;background:#6a6a6e;"></div>
<div style="left:1286px;top:829px;width:1px;height:13px;background:#6a6a6e;"></div>
<div style="left:1317px;top:829px;width:1px;height:13px;background:#6a6a6e;"></div>
<div style="left:1343px;top:829px;width:1px;height:13px;background:#6a6a6e;"></div>
<div style="left:1375px;top:829px;width:1px;height:13px;background:#6a6a6e;"></div>
<div style="left:1394px;top:829px;width:1px;height:13px;background:#6a6a6e;"></div>
<div style="left:1419px;top:829px;width:1px;height:13px;background:#6a6a6e;"></div>
<div style="left:1459px;top:829px;width:1px;height:13px;background:#6a6a6e;"></div>
<div style="left:1489px;top:829px;width:1px;height:13px;background:#6a6a6e;"></div>
<span style="left:588px;top:831.5px;font-size:11px;color:#e8e8e8;transform:scaleX(0.931);transform-origin:0 0;">154.809, 194.493, 0.000</span>
<span style="left:706px;top:831.5px;font-size:11px;color:#e8e8e8;transform:scaleX(0.851);transform-origin:0 0;">DESCRIPTION</span>
<span style="left:776px;top:831.5px;font-size:11px;color:#e8e8e8;transform:scaleX(0.918);transform-origin:0 0;">ISO-25</span>
<span style="left:815px;top:831.5px;font-size:11px;color:#e8e8e8;transform:scaleX(0.915);transform-origin:0 0;">Civil</span>
<span style="left:842px;top:831.5px;font-size:11px;color:#6c6c70;transform:scaleX(0.901);transform-origin:0 0;">SNAP</span>
<span style="left:877px;top:831.5px;font-size:11px;color:#6c6c70;transform:scaleX(0.800);transform-origin:0 0;">GRID</span>
<span style="left:905px;top:831.5px;font-size:11px;color:#6c6c70;transform:scaleX(0.831);transform-origin:0 0;">HIDEOBJECTS</span>
<span style="left:975px;top:831.5px;font-size:11px;color:#6c6c70;transform:scaleX(0.759);transform-origin:0 0;">ORTHO</span>
<div style="left:1015px;top:829px;width:32px;height:13px;background:#3b3c40;"></div>
<span style="left:1016px;top:831.5px;font-size:11px;color:#e8e8e8;transform:scaleX(0.804);transform-origin:0 0;">POLAR</span>
<div style="left:1051px;top:829px;width:33px;height:13px;background:#3b3c40;"></div>
<span style="left:1052px;top:831.5px;font-size:11px;color:#e8e8e8;transform:scaleX(0.831);transform-origin:0 0;">ESNAP</span>
<div style="left:1088px;top:829px;width:41px;height:13px;background:#3b3c40;"></div>
<span style="left:1089px;top:831.5px;font-size:11px;color:#e8e8e8;transform:scaleX(0.874);transform-origin:0 0;">STRACK</span>
<span style="left:1134px;top:831.5px;font-size:11px;color:#6c6c70;transform:scaleX(0.848);transform-origin:0 0;">LWT</span>
<span style="left:1160px;top:831.5px;font-size:11px;color:#e8e8e8;transform:scaleX(0.904);transform-origin:0 0;">TILE</span>
<span style="left:1187px;top:831.5px;font-size:11px;color:#e8e8e8;transform:scaleX(0.976);transform-origin:0 0;">1:1000 (1mm = 1m)</span>
<div style="left:1287px;top:829px;width:27px;height:13px;background:#3b3c40;"></div>
<span style="left:1288px;top:831.5px;font-size:11px;color:#e8e8e8;transform:scaleX(0.802);transform-origin:0 0;">DUCS</span>
<div style="left:1318px;top:829px;width:22px;height:13px;background:#3b3c40;"></div>
<span style="left:1319px;top:831.5px;font-size:11px;color:#e8e8e8;transform:scaleX(0.861);transform-origin:0 0;">DYN</span>
<div style="left:1344px;top:829px;width:28px;height:13px;background:#3b3c40;"></div>
<span style="left:1345px;top:831.5px;font-size:11px;color:#e8e8e8;transform:scaleX(0.818);transform-origin:0 0;">QUAD</span>
<div style="left:1376px;top:829px;width:16px;height:13px;background:#3b3c40;"></div>
<span style="left:1377px;top:831.5px;font-size:11px;color:#e8e8e8;transform:scaleX(0.968);transform-origin:0 0;">RT</span>
<div style="left:1395px;top:829px;width:22px;height:13px;background:#3b3c40;"></div>
<span style="left:1396px;top:831.5px;font-size:11px;color:#e8e8e8;transform:scaleX(0.884);transform-origin:0 0;">HKA</span>
<span style="left:1421px;top:831.5px;font-size:11px;color:#6c6c70;transform:scaleX(0.830);transform-origin:0 0;">LOCKUI</span>
<span style="left:1461px;top:831.5px;font-size:11px;color:#e8e8e8;transform:scaleX(0.989);transform-origin:0 0;">None</span>
<svg style="left:1491px;top:833px" width="9" height="6" viewBox="0 0 9 6"><path d="M0.5 0.5 H8.5 L4.5 5 Z" fill="#eee"/></svg>
<div style="left:1531px;top:840px;width:2px;height:2px;background:#bbb;"></div>
<div style="left:1528px;top:840px;width:2px;height:2px;background:#bbb;"></div>
<div style="left:1531px;top:837px;width:2px;height:2px;background:#bbb;"></div>
<div style="left:1525px;top:840px;width:2px;height:2px;background:#bbb;"></div>
<div style="left:1528px;top:837px;width:2px;height:2px;background:#bbb;"></div>
<div style="left:1531px;top:834px;width:2px;height:2px;background:#bbb;"></div>
<div style="left:455px;top:218px;width:844px;height:549px;background:#f0f0f0;border:1px solid #9a9a9a;"></div>
<div style="left:456px;top:219px;width:842px;height:50px;background:#ffffff;"></div>
<svg style="left:464px;top:226px" width="14" height="14" viewBox="0 0 14 14"><rect width="14" height="14" fill="#111"/><path d="M0 4 H14 M0 9 H14" stroke="#f0e040" stroke-width="1.2"/><path d="M7 1 L9 6 L5 8 L8 13" stroke="#f8f080" stroke-width="2" fill="none"/></svg>
<span style="left:483px;top:229.4px;font-size:11.1px;color:#909090;">Traverse Editor - TRAVERSE.dwg</span>
<div style="left:1177px;top:233px;width:10px;height:1px;background:#aaa;"></div>
<div style="left:1223px;top:228px;width:10px;height:10px;background:transparent;border:1px solid #888;"></div>
<svg style="left:1269px;top:228px" width="11" height="11" viewBox="0 0 11 11"><path d="M0.5 0.5 L10.5 10.5 M10.5 0.5 L0.5 10.5" stroke="#888" stroke-width="1.1"/></svg>
<span style="left:461px;top:253.5px;font-size:11px;color:#6e6e6e;">File</span>
<span style="left:490px;top:253.5px;font-size:11px;color:#6e6e6e;">Edit</span>
<span style="left:522px;top:253.5px;font-size:11px;color:#6e6e6e;">Cut Sheets</span>
<span style="left:589px;top:253.5px;font-size:11px;color:#6e6e6e;">Window</span>
<span style="left:644px;top:253.5px;font-size:11px;color:#6e6e6e;">Format</span>
<span style="left:693px;top:253.5px;font-size:11px;color:#6e6e6e;">Help</span>
<div style="left:456px;top:269px;width:843px;height:497px;overflow:hidden">
<div style="position:absolute;left:0.0px;top:0.0px;width:17.0px;height:17.2px;background:#f0eef2;"></div>
<div style="position:absolute;left:17.0px;top:0.0px;width:72.0px;height:17.2px;background:#c8f9c8;"></div>
<div style="position:absolute;left:89.0px;top:0.0px;width:72.0px;height:17.2px;background:#c8f9c8;"></div>
<div style="position:absolute;left:161.0px;top:0.0px;width:72.0px;height:17.2px;background:#c8f9c8;"></div>
<div style="position:absolute;left:233.0px;top:0.0px;width:72.0px;height:17.2px;background:#c8f9c8;"></div>
<div style="position:absolute;left:305.0px;top:0.0px;width:72.0px;height:17.2px;background:#c8f9c8;"></div>
<div style="position:absolute;left:377.0px;top:0.0px;width:72.0px;height:17.2px;background:#c8f9c8;"></div>
<div style="position:absolute;left:449.0px;top:0.0px;width:72.0px;height:17.2px;background:#c8f9c8;"></div>
<div style="position:absolute;left:521.0px;top:0.0px;width:72.0px;height:17.2px;background:#c8f9c8;"></div>
<span style="position:absolute;left:-97.0px;width:300px;text-align:center;top:3.7px;font-size:10.5px;color:#1a4020;">Job Desc</span>
<span style="position:absolute;left:-25.0px;width:300px;text-align:center;top:3.7px;font-size:10.5px;color:#1a4020;">Crew</span>
<span style="position:absolute;left:47.0px;width:300px;text-align:center;top:3.7px;font-size:10.5px;color:#1a4020;">Inst Num</span>
<span style="position:absolute;left:119.0px;width:300px;text-align:center;top:3.7px;font-size:10.5px;color:#1a4020;">Temp</span>
<span style="position:absolute;left:191.0px;width:300px;text-align:center;top:3.7px;font-size:10.5px;color:#1a4020;">Pressure</span>
<span style="position:absolute;left:263.0px;width:300px;text-align:center;top:3.7px;font-size:10.5px;color:#1a4020;">Start Date</span>
<div style="position:absolute;left:0.0px;top:17.2px;width:17.0px;height:15.2px;background:#f0eef2;"></div>
<div style="position:absolute;left:17.0px;top:17.2px;width:72.0px;height:15.2px;background:#ffffff;"></div>
<div style="position:absolute;left:89.0px;top:17.2px;width:72.0px;height:15.2px;background:#ffffff;"></div>
<div style="position:absolute;left:161.0px;top:17.2px;width:72.0px;height:15.2px;background:#ffffff;"></div>
<div style="position:absolute;left:233.0px;top:17.2px;width:72.0px;height:15.2px;background:#ffffff;"></div>
<div style="position:absolute;left:305.0px;top:17.2px;width:72.0px;height:15.2px;background:#ffffff;"></div>
<div style="position:absolute;left:377.0px;top:17.2px;width:72.0px;height:15.2px;background:#ffffff;"></div>
<div style="position:absolute;left:449.0px;top:17.2px;width:72.0px;height:15.2px;background:#ffffff;"></div>
<div style="position:absolute;left:521.0px;top:17.2px;width:72.0px;height:15.2px;background:#ffffff;"></div>
<span style="position:absolute;left:19.0px;top:19.8px;font-size:10.5px;color:#111;">Monitoring</span>
<span style="position:absolute;left:91.0px;top:19.8px;font-size:10.5px;color:#111;">AB/CD</span>
<span style="position:absolute;left:379.0px;top:19.8px;font-size:10.5px;color:#111;">07/03/24</span>
<div style="position:absolute;left:0.0px;top:32.4px;width:17.0px;height:15.2px;background:#f0eef2;"></div>
<div style="position:absolute;left:17.0px;top:32.4px;width:72.0px;height:15.2px;background:#ffff00;"></div>
<div style="position:absolute;left:89.0px;top:32.4px;width:72.0px;height:15.2px;background:#ffff00;"></div>
<div style="position:absolute;left:161.0px;top:32.4px;width:72.0px;height:15.2px;background:#ffff00;"></div>
<div style="position:absolute;left:233.0px;top:32.4px;width:72.0px;height:15.2px;background:#ffff00;"></div>
<div style="position:absolute;left:305.0px;top:32.4px;width:72.0px;height:15.2px;background:#ffff00;"></div>
<div style="position:absolute;left:377.0px;top:32.4px;width:72.0px;height:15.2px;background:#ffff00;"></div>
<div style="position:absolute;left:449.0px;top:32.4px;width:72.0px;height:15.2px;background:#ffff00;"></div>
<div style="position:absolute;left:521.0px;top:32.4px;width:72.0px;height:15.2px;background:#ffff00;"></div>
<span style="position:absolute;left:19.0px;top:35.0px;font-size:10.5px;color:#111;">Store F</span>
<div style="position:absolute;left:0.0px;top:47.6px;width:17.0px;height:15.2px;background:#f0eef2;"></div>
<div style="position:absolute;left:17.0px;top:47.6px;width:72.0px;height:15.2px;background:#ffff00;"></div>
<div style="position:absolute;left:89.0px;top:47.6px;width:72.0px;height:15.2px;background:#ffffff;"></div>
<div style="position:absolute;left:161.0px;top:47.6px;width:72.0px;height:15.2px;background:#ffffff;"></div>
<div style="position:absolute;left:233.0px;top:47.6px;width:72.0px;height:15.2px;background:#ffffff;"></div>
<div style="position:absolute;left:305.0px;top:47.6px;width:72.0px;height:15.2px;background:#ffffff;"></div>
<div style="position:absolute;left:377.0px;top:47.6px;width:72.0px;height:15.2px;background:#ffffff;"></div>
<div style="position:absolute;left:449.0px;top:47.6px;width:72.0px;height:15.2px;background:#ffffff;"></div>
<div style="position:absolute;left:521.0px;top:47.6px;width:72.0px;height:15.2px;background:#ffffff;"></div>
<span style="position:absolute;left:-97.0px;width:300px;text-align:center;top:50.2px;font-size:10.5px;color:#111;">SS</span>
<div style="position:absolute;left:0.0px;top:62.8px;width:17.0px;height:15.2px;background:#f0eef2;"></div>
<div style="position:absolute;left:17.0px;top:62.8px;width:72.0px;height:15.2px;background:#ffff00;"></div>
<div style="position:absolute;left:89.0px;top:62.8px;width:72.0px;height:15.2px;background:#ffffff;"></div>
<div style="position:absolute;left:161.0px;top:62.8px;width:72.0px;height:15.2px;background:#ffffff;"></div>
<div style="position:absolute;left:233.0px;top:62.8px;width:72.0px;height:15.2px;background:#ffffff;"></div>
<div style="position:absolute;left:305.0px;top:62.8px;width:72.0px;height:15.2px;background:#ffffff;"></div>
<div style="position:absolute;left:377.0px;top:62.8px;width:72.0px;height:15.2px;background:#ffffff;"></div>
<div style="position:absolute;left:449.0px;top:62.8px;width:72.0px;height:15.2px;background:#ffffff;"></div>
<div style="position:absolute;left:521.0px;top:62.8px;width:72.0px;height:15.2px;background:#ffffff;"></div>
<span style="position:absolute;left:-97.0px;width:300px;text-align:center;top:65.4px;font-size:10.5px;color:#111;">SS</span>
<div style="position:absolute;left:0.0px;top:78.0px;width:17.0px;height:15.2px;background:#f0eef2;"></div>
<div style="position:absolute;left:17.0px;top:78.0px;width:72.0px;height:15.2px;background:#ffff00;"></div>
<div style="position:absolute;left:89.0px;top:78.0px;width:72.0px;height:15.2px;background:#ffffff;"></div>
<div style="position:absolute;left:161.0px;top:78.0px;width:72.0px;height:15.2px;background:#ffffff;"></div>
<div style="position:absolute;left:233.0px;top:78.0px;width:72.0px;height:15.2px;background:#ffffff;"></div>
<div style="position:absolute;left:305.0px;top:78.0px;width:72.0px;height:15.2px;background:#ffffff;"></div>
<div style="position:absolute;left:377.0px;top:78.0px;width:72.0px;height:15.2px;background:#ffffff;"></div>
<div style="position:absolute;left:449.0px;top:78.0px;width:72.0px;height:15.2px;background:#ffffff;"></div>
<div style="position:absolute;left:521.0px;top:78.0px;width:72.0px;height:15.2px;background:#ffffff;"></div>
<span style="position:absolute;left:-97.0px;width:300px;text-align:center;top:80.6px;font-size:10.5px;color:#111;">SS</span>
<div style="position:absolute;left:0.0px;top:93.1px;width:17.0px;height:15.2px;background:#f0eef2;"></div>
<div style="position:absolute;left:17.0px;top:93.1px;width:72.0px;height:15.2px;background:#ffff00;"></div>
<div style="position:absolute;left:89.0px;top:93.1px;width:72.0px;height:15.2px;background:#ffffff;"></div>
<div style="position:absolute;left:161.0px;top:93.1px;width:72.0px;height:15.2px;background:#ffffff;"></div>
<div style="position:absolute;left:233.0px;top:93.1px;width:72.0px;height:15.2px;background:#ffffff;"></div>
<div style="position:absolute;left:305.0px;top:93.1px;width:72.0px;height:15.2px;background:#ffffff;"></div>
<div style="position:absolute;left:377.0px;top:93.1px;width:72.0px;height:15.2px;background:#ffffff;"></div>
<div style="position:absolute;left:449.0px;top:93.1px;width:72.0px;height:15.2px;background:#ffffff;"></div>
<div style="position:absolute;left:521.0px;top:93.1px;width:72.0px;height:15.2px;background:#ffffff;"></div>
<span style="position:absolute;left:-97.0px;width:300px;text-align:center;top:95.8px;font-size:10.5px;color:#111;">SS</span>
<div style="position:absolute;left:0.0px;top:108.3px;width:17.0px;height:15.2px;background:#f0eef2;"></div>
<div style="position:absolute;left:17.0px;top:108.3px;width:72.0px;height:15.2px;background:#ffffc8;"></div>
<div style="position:absolute;left:89.0px;top:108.3px;width:72.0px;height:15.2px;background:#ffffc8;"></div>
<div style="position:absolute;left:161.0px;top:108.3px;width:72.0px;height:15.2px;background:#ffffc8;"></div>
<div style="position:absolute;left:233.0px;top:108.3px;width:72.0px;height:15.2px;background:#ffffc8;"></div>
<div style="position:absolute;left:305.0px;top:108.3px;width:72.0px;height:15.2px;background:#ffffc8;"></div>
<div style="position:absolute;left:377.0px;top:108.3px;width:72.0px;height:15.2px;background:#ffffc8;"></div>
<div style="position:absolute;left:449.0px;top:108.3px;width:72.0px;height:15.2px;background:#ffffc8;"></div>
<div style="position:absolute;left:521.0px;top:108.3px;width:72.0px;height:15.2px;background:#ffffc8;"></div>
<span style="position:absolute;left:-97.0px;width:300px;text-align:center;top:111.0px;font-size:10.5px;color:#111;">Occupied Pt</span>
<div style="position:absolute;left:0.0px;top:123.5px;width:17.0px;height:15.2px;background:#f0eef2;"></div>
<div style="position:absolute;left:17.0px;top:123.5px;width:72.0px;height:15.2px;background:#ffffc8;"></div>
<div style="position:absolute;left:89.0px;top:123.5px;width:72.0px;height:15.2px;background:#ffffc8;"></div>
<div style="position:absolute;left:161.0px;top:123.5px;width:72.0px;height:15.2px;background:#ffffc8;"></div>
<div style="position:absolute;left:233.0px;top:123.5px;width:72.0px;height:15.2px;background:#ffffc8;"></div>
<div style="position:absolute;left:305.0px;top:123.5px;width:72.0px;height:15.2px;background:#ffffc8;"></div>
<div style="position:absolute;left:377.0px;top:123.5px;width:72.0px;height:15.2px;background:#ffffc8;"></div>
<div style="position:absolute;left:449.0px;top:123.5px;width:72.0px;height:15.2px;background:#ffffc8;"></div>
<div style="position:absolute;left:521.0px;top:123.5px;width:72.0px;height:15.2px;background:#ffffc8;"></div>
<div style="position:absolute;left:0.0px;top:138.7px;width:17.0px;height:15.2px;background:#f0eef2;"></div>
<div style="position:absolute;left:17.0px;top:138.7px;width:72.0px;height:15.2px;background:#e4e4e4;"></div>
<div style="position:absolute;left:89.0px;top:138.7px;width:72.0px;height:15.2px;background:#e4e4e4;"></div>
<div style="position:absolute;left:161.0px;top:138.7px;width:72.0px;height:15.2px;background:#e4e4e4;"></div>
<div style="position:absolute;left:233.0px;top:138.7px;width:72.0px;height:15.2px;background:#e4e4e4;"></div>
<div style="position:absolute;left:305.0px;top:138.7px;width:72.0px;height:15.2px;background:#e4e4e4;"></div>
<div style="position:absolute;left:377.0px;top:138.7px;width:72.0px;height:15.2px;background:#e4e4e4;"></div>
<div style="position:absolute;left:449.0px;top:138.7px;width:72.0px;height:15.2px;background:#e4e4e4;"></div>
<div style="position:absolute;left:521.0px;top:138.7px;width:72.0px;height:15.2px;background:#e4e4e4;"></div>
<span style="position:absolute;left:-97.0px;width:300px;text-align:center;top:141.4px;font-size:10.5px;color:#111;">Note</span>
<div style="position:absolute;left:0.0px;top:153.9px;width:17.0px;height:15.2px;background:#f0eef2;"></div>
<div style="position:absolute;left:17.0px;top:153.9px;width:72.0px;height:15.2px;background:#e4e4e4;"></div>
<div style="position:absolute;left:89.0px;top:153.9px;width:72.0px;height:15.2px;background:#e4e4e4;"></div>
<div style="position:absolute;left:161.0px;top:153.9px;width:72.0px;height:15.2px;background:#e4e4e4;"></div>
<div style="position:absolute;left:233.0px;top:153.9px;width:72.0px;height:15.2px;background:#e4e4e4;"></div>
<div style="position:absolute;left:305.0px;top:153.9px;width:72.0px;height:15.2px;background:#e4e4e4;"></div>
<div style="position:absolute;left:377.0px;top:153.9px;width:72.0px;height:15.2px;background:#e4e4e4;"></div>
<div style="position:absolute;left:449.0px;top:153.9px;width:72.0px;height:15.2px;background:#e4e4e4;"></div>
<div style="position:absolute;left:521.0px;top:153.9px;width:72.0px;height:15.2px;background:#e4e4e4;"></div>
<span style="position:absolute;left:-97.0px;width:300px;text-align:center;top:156.6px;font-size:10.5px;color:#111;">Note</span>
<div style="position:absolute;left:0.0px;top:169.1px;width:17.0px;height:15.2px;background:#f0eef2;"></div>
<div style="position:absolute;left:17.0px;top:169.1px;width:72.0px;height:15.2px;background:#e4e4e4;"></div>
<div style="position:absolute;left:89.0px;top:169.1px;width:72.0px;height:15.2px;background:#e4e4e4;"></div>
<div style="position:absolute;left:161.0px;top:169.1px;width:72.0px;height:15.2px;background:#e4e4e4;"></div>
<div style="position:absolute;left:233.0px;top:169.1px;width:72.0px;height:15.2px;background:#e4e4e4;"></div>
<div style="position:absolute;left:305.0px;top:169.1px;width:72.0px;height:15.2px;background:#e4e4e4;"></div>
<div style="position:absolute;left:377.0px;top:169.1px;width:72.0px;height:15.2px;background:#e4e4e4;"></div>
<div style="position:absolute;left:449.0px;top:169.1px;width:72.0px;height:15.2px;background:#e4e4e4;"></div>
<div style="position:absolute;left:521.0px;top:169.1px;width:72.0px;height:15.2px;background:#e4e4e4;"></div>
<span style="position:absolute;left:-97.0px;width:300px;text-align:center;top:171.7px;font-size:10.5px;color:#111;">Note</span>
<div style="position:absolute;left:0.0px;top:184.3px;width:17.0px;height:15.2px;background:#f0eef2;"></div>
<div style="position:absolute;left:17.0px;top:184.3px;width:72.0px;height:15.2px;background:#d4d4f8;"></div>
<div style="position:absolute;left:89.0px;top:184.3px;width:72.0px;height:15.2px;background:#d4d4f8;"></div>
<div style="position:absolute;left:161.0px;top:184.3px;width:72.0px;height:15.2px;background:#d4d4f8;"></div>
<div style="position:absolute;left:233.0px;top:184.3px;width:72.0px;height:15.2px;background:#d4d4f8;"></div>
<div style="position:absolute;left:305.0px;top:184.3px;width:72.0px;height:15.2px;background:#d4d4f8;"></div>
<div style="position:absolute;left:377.0px;top:184.3px;width:72.0px;height:15.2px;background:#d4d4f8;"></div>
<div style="position:absolute;left:449.0px;top:184.3px;width:72.0px;height:15.2px;background:#d4d4f8;"></div>
<div style="position:absolute;left:521.0px;top:184.3px;width:72.0px;height:15.2px;background:#d4d4f8;"></div>
<span style="position:absolute;left:-97.0px;width:300px;text-align:center;top:186.9px;font-size:10.5px;color:#3a3a6a;">Shot Type</span>
<div style="position:absolute;left:0.0px;top:199.5px;width:17.0px;height:15.2px;background:#f0eef2;"></div>
<div style="position:absolute;left:17.0px;top:199.5px;width:72.0px;height:15.2px;background:#d4d4f8;"></div>
<div style="position:absolute;left:89.0px;top:199.5px;width:72.0px;height:15.2px;background:#ffffff;"></div>
<div style="position:absolute;left:161.0px;top:199.5px;width:72.0px;height:15.2px;background:#ffffff;"></div>
<div style="position:absolute;left:233.0px;top:199.5px;width:72.0px;height:15.2px;background:#ffffff;"></div>
<div style="position:absolute;left:305.0px;top:199.5px;width:72.0px;height:15.2px;background:#ffffff;"></div>
<div style="position:absolute;left:377.0px;top:199.5px;width:72.0px;height:15.2px;background:#ffffff;"></div>
<div style="position:absolute;left:449.0px;top:199.5px;width:72.0px;height:15.2px;background:#ffffff;"></div>
<div style="position:absolute;left:521.0px;top:199.5px;width:72.0px;height:15.2px;background:#ffffff;"></div>
<span style="position:absolute;left:-97.0px;width:300px;text-align:center;top:202.1px;font-size:10.5px;color:#3a3a6a;">SS</span>
<div style="position:absolute;left:0.0px;top:214.7px;width:17.0px;height:15.2px;background:#f0eef2;"></div>
<div style="position:absolute;left:17.0px;top:214.7px;width:72.0px;height:15.2px;background:#e4e4e4;"></div>
<div style="position:absolute;left:89.0px;top:214.7px;width:72.0px;height:15.2px;background:#e4e4e4;"></div>
<div style="position:absolute;left:161.0px;top:214.7px;width:72.0px;height:15.2px;background:#e4e4e4;"></div>
<div style="position:absolute;left:233.0px;top:214.7px;width:72.0px;height:15.2px;background:#e4e4e4;"></div>
<div style="position:absolute;left:305.0px;top:214.7px;width:72.0px;height:15.2px;background:#e4e4e4;"></div>
<div style="position:absolute;left:377.0px;top:214.7px;width:72.0px;height:15.2px;background:#e4e4e4;"></div>
<div style="position:absolute;left:449.0px;top:214.7px;width:72.0px;height:15.2px;background:#e4e4e4;"></div>
<div style="position:absolute;left:521.0px;top:214.7px;width:72.0px;height:15.2px;background:#e4e4e4;"></div>
<span style="position:absolute;left:-97.0px;width:300px;text-align:center;top:217.3px;font-size:10.5px;color:#222;">Note</span>
<div style="position:absolute;left:0.0px;top:229.9px;width:17.0px;height:15.2px;background:#f0eef2;"></div>
<div style="position:absolute;left:17.0px;top:229.9px;width:72.0px;height:15.2px;background:#d4d4f8;"></div>
<div style="position:absolute;left:89.0px;top:229.9px;width:72.0px;height:15.2px;background:#ffffff;"></div>
<div style="position:absolute;left:161.0px;top:229.9px;width:72.0px;height:15.2px;background:#ffffff;"></div>
<div style="position:absolute;left:233.0px;top:229.9px;width:72.0px;height:15.2px;background:#ffffff;"></div>
<div style="position:absolute;left:305.0px;top:229.9px;width:72.0px;height:15.2px;background:#ffffff;"></div>
<div style="position:absolute;left:377.0px;top:229.9px;width:72.0px;height:15.2px;background:#ffffff;"></div>
<div style="position:absolute;left:449.0px;top:229.9px;width:72.0px;height:15.2px;background:#ffffff;"></div>
<div style="position:absolute;left:521.0px;top:229.9px;width:72.0px;height:15.2px;background:#ffffff;"></div>
<span style="position:absolute;left:-97.0px;width:300px;text-align:center;top:232.5px;font-size:10.5px;color:#3a3a6a;">SS</span>
<div style="position:absolute;left:0.0px;top:245.0px;width:17.0px;height:15.2px;background:#f0eef2;"></div>
<div style="position:absolute;left:17.0px;top:245.0px;width:72.0px;height:15.2px;background:#e4e4e4;"></div>
<div style="position:absolute;left:89.0px;top:245.0px;width:72.0px;height:15.2px;background:#e4e4e4;"></div>
<div style="position:absolute;left:161.0px;top:245.0px;width:72.0px;height:15.2px;background:#e4e4e4;"></div>
<div style="position:absolute;left:233.0px;top:245.0px;width:72.0px;height:15.2px;background:#e4e4e4;"></div>
<div style="position:absolute;left:305.0px;top:245.0px;width:72.0px;height:15.2px;background:#e4e4e4;"></div>
<div style="position:absolute;left:377.0px;top:245.0px;width:72.0px;height:15.2px;background:#e4e4e4;"></div>
<div style="position:absolute;left:449.0px;top:245.0px;width:72.0px;height:15.2px;background:#e4e4e4;"></div>
<div style="position:absolute;left:521.0px;top:245.0px;width:72.0px;height:15.2px;background:#e4e4e4;"></div>
<span style="position:absolute;left:-97.0px;width:300px;text-align:center;top:247.7px;font-size:10.5px;color:#222;">Note</span>
<div style="position:absolute;left:0.0px;top:260.2px;width:17.0px;height:15.2px;background:#f0eef2;"></div>
<div style="position:absolute;left:17.0px;top:260.2px;width:72.0px;height:15.2px;background:#d4d4f8;"></div>
<div style="position:absolute;left:89.0px;top:260.2px;width:72.0px;height:15.2px;background:#ffffff;"></div>
<div style="position:absolute;left:161.0px;top:260.2px;width:72.0px;height:15.2px;background:#ffffff;"></div>
<div style="position:absolute;left:233.0px;top:260.2px;width:72.0px;height:15.2px;background:#ffffff;"></div>
<div style="position:absolute;left:305.0px;top:260.2px;width:72.0px;height:15.2px;background:#ffffff;"></div>
<div style="position:absolute;left:377.0px;top:260.2px;width:72.0px;height:15.2px;background:#ffffff;"></div>
<div style="position:absolute;left:449.0px;top:260.2px;width:72.0px;height:15.2px;background:#ffffff;"></div>
<div style="position:absolute;left:521.0px;top:260.2px;width:72.0px;height:15.2px;background:#ffffff;"></div>
<span style="position:absolute;left:-97.0px;width:300px;text-align:center;top:262.9px;font-size:10.5px;color:#3a3a6a;">SS</span>
<div style="position:absolute;left:0.0px;top:275.4px;width:17.0px;height:15.2px;background:#f0eef2;"></div>
<div style="position:absolute;left:17.0px;top:275.4px;width:72.0px;height:15.2px;background:#ffffc8;"></div>
<div style="position:absolute;left:89.0px;top:275.4px;width:72.0px;height:15.2px;background:#ffffc8;"></div>
<div style="position:absolute;left:161.0px;top:275.4px;width:72.0px;height:15.2px;background:#ffffc8;"></div>
<div style="position:absolute;left:233.0px;top:275.4px;width:72.0px;height:15.2px;background:#ffffc8;"></div>
<div style="position:absolute;left:305.0px;top:275.4px;width:72.0px;height:15.2px;background:#ffffc8;"></div>
<div style="position:absolute;left:377.0px;top:275.4px;width:72.0px;height:15.2px;background:#ffffc8;"></div>
<div style="position:absolute;left:449.0px;top:275.4px;width:72.0px;height:15.2px;background:#ffffc8;"></div>
<div style="position:absolute;left:521.0px;top:275.4px;width:72.0px;height:15.2px;background:#ffffc8;"></div>
<span style="position:absolute;left:-97.0px;width:300px;text-align:center;top:278.1px;font-size:10.5px;color:#111;">Occupied Pt</span>
<div style="position:absolute;left:0.0px;top:290.6px;width:17.0px;height:15.2px;background:#f0eef2;"></div>
<div style="position:absolute;left:17.0px;top:290.6px;width:72.0px;height:15.2px;background:#ffffc8;"></div>
<div style="position:absolute;left:89.0px;top:290.6px;width:72.0px;height:15.2px;background:#ffffc8;"></div>
<div style="position:absolute;left:161.0px;top:290.6px;width:72.0px;height:15.2px;background:#ffffc8;"></div>
<div style="position:absolute;left:233.0px;top:290.6px;width:72.0px;height:15.2px;background:#ffffc8;"></div>
<div style="position:absolute;left:305.0px;top:290.6px;width:72.0px;height:15.2px;background:#ffffc8;"></div>
<div style="position:absolute;left:377.0px;top:290.6px;width:72.0px;height:15.2px;background:#ffffc8;"></div>
<div style="position:absolute;left:449.0px;top:290.6px;width:72.0px;height:15.2px;background:#ffffc8;"></div>
<div style="position:absolute;left:521.0px;top:290.6px;width:72.0px;height:15.2px;background:#ffffc8;"></div>
<span style="position:absolute;left:-213.0px;width:300px;text-align:right;top:293.3px;font-size:10.5px;color:#111;">6000</span>
<span style="position:absolute;left:-141.0px;width:300px;text-align:right;top:293.3px;font-size:10.5px;color:#111;">6478</span>
<span style="position:absolute;left:3.0px;width:300px;text-align:right;top:293.3px;font-size:10.5px;color:#111;">156°01'02"</span>
<span style="position:absolute;left:75.0px;width:300px;text-align:right;top:293.3px;font-size:10.5px;color:#111;">1.524</span>
<div style="position:absolute;left:0.0px;top:305.8px;width:17.0px;height:15.2px;background:#f0eef2;"></div>
<div style="position:absolute;left:17.0px;top:305.8px;width:72.0px;height:15.2px;background:#d4d4f8;"></div>
<div style="position:absolute;left:89.0px;top:305.8px;width:72.0px;height:15.2px;background:#d4d4f8;"></div>
<div style="position:absolute;left:161.0px;top:305.8px;width:72.0px;height:15.2px;background:#d4d4f8;"></div>
<div style="position:absolute;left:233.0px;top:305.8px;width:72.0px;height:15.2px;background:#d4d4f8;"></div>
<div style="position:absolute;left:305.0px;top:305.8px;width:72.0px;height:15.2px;background:#d4d4f8;"></div>
<div style="position:absolute;left:377.0px;top:305.8px;width:72.0px;height:15.2px;background:#d4d4f8;"></div>
<div style="position:absolute;left:449.0px;top:305.8px;width:72.0px;height:15.2px;background:#d4d4f8;"></div>
<div style="position:absolute;left:521.0px;top:305.8px;width:72.0px;height:15.2px;background:#d4d4f8;"></div>
<span style="position:absolute;left:-97.0px;width:300px;text-align:center;top:308.5px;font-size:10.5px;color:#3a3a6a;">Shot Type</span>
<span style="position:absolute;left:-25.0px;width:300px;text-align:center;top:308.5px;font-size:10.5px;color:#3a3a6a;">Shot Pt</span>
<span style="position:absolute;left:47.0px;width:300px;text-align:center;top:308.5px;font-size:10.5px;color:#3a3a6a;">Targ Ht</span>
<span style="position:absolute;left:119.0px;width:300px;text-align:center;top:308.5px;font-size:10.5px;color:#3a3a6a;">Hz Ang</span>
<span style="position:absolute;left:191.0px;width:300px;text-align:center;top:308.5px;font-size:10.5px;color:#3a3a6a;">Vt Ang</span>
<span style="position:absolute;left:263.0px;width:300px;text-align:center;top:308.5px;font-size:10.5px;color:#3a3a6a;">Slp Dist</span>
<span style="position:absolute;left:335.0px;width:300px;text-align:center;top:308.5px;font-size:10.5px;color:#3a3a6a;">Desc</span>
<div style="position:absolute;left:0.0px;top:321.0px;width:17.0px;height:15.2px;background:#f0eef2;"></div>
<div style="position:absolute;left:17.0px;top:321.0px;width:72.0px;height:15.2px;background:#d4d4f8;"></div>
<div style="position:absolute;left:89.0px;top:321.0px;width:72.0px;height:15.2px;background:#ffffff;"></div>
<div style="position:absolute;left:161.0px;top:321.0px;width:72.0px;height:15.2px;background:#ffffff;"></div>
<div style="position:absolute;left:233.0px;top:321.0px;width:72.0px;height:15.2px;background:#ffffff;"></div>
<div style="position:absolute;left:305.0px;top:321.0px;width:72.0px;height:15.2px;background:#ffffff;"></div>
<div style="position:absolute;left:377.0px;top:321.0px;width:72.0px;height:15.2px;background:#ffffff;"></div>
<div style="position:absolute;left:449.0px;top:321.0px;width:72.0px;height:15.2px;background:#ffffff;"></div>
<div style="position:absolute;left:521.0px;top:321.0px;width:72.0px;height:15.2px;background:#ffffff;"></div>
<span style="position:absolute;left:-97.0px;width:300px;text-align:center;top:323.6px;font-size:10.5px;color:#3a3a6a;">SS</span>
<span style="position:absolute;left:-141.0px;width:300px;text-align:right;top:323.6px;font-size:10.5px;color:#222;">6478</span>
<span style="position:absolute;left:-69.0px;width:300px;text-align:right;top:323.6px;font-size:10.5px;color:#222;">1.547</span>
<span style="position:absolute;left:3.0px;width:300px;text-align:right;top:323.6px;font-size:10.5px;color:#222;">156°01'02"</span>
<span style="position:absolute;left:75.0px;width:300px;text-align:right;top:323.6px;font-size:10.5px;color:#222;">90°23'07"</span>
<span style="position:absolute;left:147.0px;width:300px;text-align:right;top:323.6px;font-size:10.5px;color:#222;">164.563</span>
<span style="position:absolute;left:219.0px;width:300px;text-align:right;top:323.6px;font-size:10.5px;color:#222;">RBR</span>
<div style="position:absolute;left:0.0px;top:336.2px;width:17.0px;height:15.2px;background:#f0eef2;"></div>
<div style="position:absolute;left:17.0px;top:336.2px;width:72.0px;height:15.2px;background:#d4d4f8;"></div>
<div style="position:absolute;left:89.0px;top:336.2px;width:72.0px;height:15.2px;background:#ffffff;"></div>
<div style="position:absolute;left:161.0px;top:336.2px;width:72.0px;height:15.2px;background:#ffffff;"></div>
<div style="position:absolute;left:233.0px;top:336.2px;width:72.0px;height:15.2px;background:#ffffff;"></div>
<div style="position:absolute;left:305.0px;top:336.2px;width:72.0px;height:15.2px;background:#ffffff;"></div>
<div style="position:absolute;left:377.0px;top:336.2px;width:72.0px;height:15.2px;background:#ffffff;"></div>
<div style="position:absolute;left:449.0px;top:336.2px;width:72.0px;height:15.2px;background:#ffffff;"></div>
<div style="position:absolute;left:521.0px;top:336.2px;width:72.0px;height:15.2px;background:#ffffff;"></div>
<span style="position:absolute;left:-97.0px;width:300px;text-align:center;top:338.8px;font-size:10.5px;color:#3a3a6a;">SS</span>
<span style="position:absolute;left:-141.0px;width:300px;text-align:right;top:338.8px;font-size:10.5px;color:#222;">6478</span>
<span style="position:absolute;left:-69.0px;width:300px;text-align:right;top:338.8px;font-size:10.5px;color:#222;">1.547</span>
<span style="position:absolute;left:3.0px;width:300px;text-align:right;top:338.8px;font-size:10.5px;color:#222;">336°00'52"</span>
<span style="position:absolute;left:75.0px;width:300px;text-align:right;top:338.8px;font-size:10.5px;color:#222;">269°36'42"</span>
<span style="position:absolute;left:147.0px;width:300px;text-align:right;top:338.8px;font-size:10.5px;color:#222;">164.564</span>
<span style="position:absolute;left:219.0px;width:300px;text-align:right;top:338.8px;font-size:10.5px;color:#222;">RBR</span>
<div style="position:absolute;left:0.0px;top:351.4px;width:17.0px;height:15.2px;background:#f0eef2;"></div>
<div style="position:absolute;left:17.0px;top:351.4px;width:72.0px;height:15.2px;background:#d4d4f8;"></div>
<div style="position:absolute;left:89.0px;top:351.4px;width:72.0px;height:15.2px;background:#ffffff;"></div>
<div style="position:absolute;left:161.0px;top:351.4px;width:72.0px;height:15.2px;background:#ffffff;"></div>
<div style="position:absolute;left:233.0px;top:351.4px;width:72.0px;height:15.2px;background:#ffffff;"></div>
<div style="position:absolute;left:305.0px;top:351.4px;width:72.0px;height:15.2px;background:#ffffff;"></div>
<div style="position:absolute;left:377.0px;top:351.4px;width:72.0px;height:15.2px;background:#ffffff;"></div>
<div style="position:absolute;left:449.0px;top:351.4px;width:72.0px;height:15.2px;background:#ffffff;"></div>
<div style="position:absolute;left:521.0px;top:351.4px;width:72.0px;height:15.2px;background:#ffffff;"></div>
<span style="position:absolute;left:-97.0px;width:300px;text-align:center;top:354.0px;font-size:10.5px;color:#3a3a6a;">SS</span>
<span style="position:absolute;left:-141.0px;width:300px;text-align:right;top:354.0px;font-size:10.5px;color:#222;">50</span>
<span style="position:absolute;left:-69.0px;width:300px;text-align:right;top:354.0px;font-size:10.5px;color:#222;">0.000</span>
<span style="position:absolute;left:3.0px;width:300px;text-align:right;top:354.0px;font-size:10.5px;color:#222;">192°51'44"</span>
<span style="position:absolute;left:75.0px;width:300px;text-align:right;top:354.0px;font-size:10.5px;color:#222;">87°22'55"</span>
<span style="position:absolute;left:147.0px;width:300px;text-align:right;top:354.0px;font-size:10.5px;color:#222;">101.333</span>
<span style="position:absolute;left:219.0px;width:300px;text-align:right;top:354.0px;font-size:10.5px;color:#222;">TGT</span>
<div style="position:absolute;left:0.0px;top:366.6px;width:17.0px;height:15.2px;background:#f0eef2;"></div>
<div style="position:absolute;left:17.0px;top:366.6px;width:72.0px;height:15.2px;background:#d4d4f8;"></div>
<div style="position:absolute;left:89.0px;top:366.6px;width:72.0px;height:15.2px;background:#ffffff;"></div>
<div style="position:absolute;left:161.0px;top:366.6px;width:72.0px;height:15.2px;background:#ffffff;"></div>
<div style="position:absolute;left:233.0px;top:366.6px;width:72.0px;height:15.2px;background:#ffffff;"></div>
<div style="position:absolute;left:305.0px;top:366.6px;width:72.0px;height:15.2px;background:#ffffff;"></div>
<div style="position:absolute;left:377.0px;top:366.6px;width:72.0px;height:15.2px;background:#ffffff;"></div>
<div style="position:absolute;left:449.0px;top:366.6px;width:72.0px;height:15.2px;background:#ffffff;"></div>
<div style="position:absolute;left:521.0px;top:366.6px;width:72.0px;height:15.2px;background:#ffffff;"></div>
<span style="position:absolute;left:-97.0px;width:300px;text-align:center;top:369.2px;font-size:10.5px;color:#3a3a6a;">SS</span>
<span style="position:absolute;left:-141.0px;width:300px;text-align:right;top:369.2px;font-size:10.5px;color:#222;">50</span>
<span style="position:absolute;left:-69.0px;width:300px;text-align:right;top:369.2px;font-size:10.5px;color:#222;">0.000</span>
<span style="position:absolute;left:3.0px;width:300px;text-align:right;top:369.2px;font-size:10.5px;color:#222;">12°51'29"</span>
<span style="position:absolute;left:75.0px;width:300px;text-align:right;top:369.2px;font-size:10.5px;color:#222;">272°36'54"</span>
<span style="position:absolute;left:147.0px;width:300px;text-align:right;top:369.2px;font-size:10.5px;color:#222;">101.332</span>
<span style="position:absolute;left:219.0px;width:300px;text-align:right;top:369.2px;font-size:10.5px;color:#222;">TGT</span>
<div style="position:absolute;left:0.0px;top:381.8px;width:17.0px;height:15.2px;background:#f0eef2;"></div>
<div style="position:absolute;left:17.0px;top:381.8px;width:72.0px;height:15.2px;background:#d4d4f8;"></div>
<div style="position:absolute;left:89.0px;top:381.8px;width:72.0px;height:15.2px;background:#ffffff;"></div>
<div style="position:absolute;left:161.0px;top:381.8px;width:72.0px;height:15.2px;background:#ffffff;"></div>
<div style="position:absolute;left:233.0px;top:381.8px;width:72.0px;height:15.2px;background:#ffffff;"></div>
<div style="position:absolute;left:305.0px;top:381.8px;width:72.0px;height:15.2px;background:#ffffff;"></div>
<div style="position:absolute;left:377.0px;top:381.8px;width:72.0px;height:15.2px;background:#ffffff;"></div>
<div style="position:absolute;left:449.0px;top:381.8px;width:72.0px;height:15.2px;background:#ffffff;"></div>
<div style="position:absolute;left:521.0px;top:381.8px;width:72.0px;height:15.2px;background:#ffffff;"></div>
<span style="position:absolute;left:-97.0px;width:300px;text-align:center;top:384.4px;font-size:10.5px;color:#3a3a6a;">SS</span>
<span style="position:absolute;left:-141.0px;width:300px;text-align:right;top:384.4px;font-size:10.5px;color:#222;">51</span>
<span style="position:absolute;left:-69.0px;width:300px;text-align:right;top:384.4px;font-size:10.5px;color:#222;">0.000</span>
<span style="position:absolute;left:3.0px;width:300px;text-align:right;top:384.4px;font-size:10.5px;color:#222;">192°41'25"</span>
<span style="position:absolute;left:75.0px;width:300px;text-align:right;top:384.4px;font-size:10.5px;color:#222;">88°01'58"</span>
<span style="position:absolute;left:147.0px;width:300px;text-align:right;top:384.4px;font-size:10.5px;color:#222;">101.206</span>
<span style="position:absolute;left:219.0px;width:300px;text-align:right;top:384.4px;font-size:10.5px;color:#222;">TGT</span>
<div style="position:absolute;left:0.0px;top:397.0px;width:17.0px;height:15.2px;background:#f0eef2;"></div>
<div style="position:absolute;left:17.0px;top:397.0px;width:72.0px;height:15.2px;background:#d4d4f8;"></div>
<div style="position:absolute;left:89.0px;top:397.0px;width:72.0px;height:15.2px;background:#ffffff;"></div>
<div style="position:absolute;left:161.0px;top:397.0px;width:72.0px;height:15.2px;background:#ffffff;"></div>
<div style="position:absolute;left:233.0px;top:397.0px;width:72.0px;height:15.2px;background:#ffffff;"></div>
<div style="position:absolute;left:305.0px;top:397.0px;width:72.0px;height:15.2px;background:#ffffff;"></div>
<div style="position:absolute;left:377.0px;top:397.0px;width:72.0px;height:15.2px;background:#ffffff;"></div>
<div style="position:absolute;left:449.0px;top:397.0px;width:72.0px;height:15.2px;background:#ffffff;"></div>
<div style="position:absolute;left:521.0px;top:397.0px;width:72.0px;height:15.2px;background:#ffffff;"></div>
<span style="position:absolute;left:-97.0px;width:300px;text-align:center;top:399.6px;font-size:10.5px;color:#3a3a6a;">SS</span>
<span style="position:absolute;left:-141.0px;width:300px;text-align:right;top:399.6px;font-size:10.5px;color:#222;">51</span>
<span style="position:absolute;left:-69.0px;width:300px;text-align:right;top:399.6px;font-size:10.5px;color:#222;">0.000</span>
<span style="position:absolute;left:3.0px;width:300px;text-align:right;top:399.6px;font-size:10.5px;color:#222;">12°41'34"</span>
<span style="position:absolute;left:75.0px;width:300px;text-align:right;top:399.6px;font-size:10.5px;color:#222;">271°57'47"</span>
<span style="position:absolute;left:147.0px;width:300px;text-align:right;top:399.6px;font-size:10.5px;color:#222;">101.205</span>
<span style="position:absolute;left:219.0px;width:300px;text-align:right;top:399.6px;font-size:10.5px;color:#222;">TGT</span>
<div style="position:absolute;left:0.0px;top:412.1px;width:17.0px;height:15.2px;background:#f0eef2;"></div>
<div style="position:absolute;left:17.0px;top:412.1px;width:72.0px;height:15.2px;background:#d4d4f8;"></div>
<div style="position:absolute;left:89.0px;top:412.1px;width:72.0px;height:15.2px;background:#ffffff;"></div>
<div style="position:absolute;left:161.0px;top:412.1px;width:72.0px;height:15.2px;background:#ffffff;"></div>
<div style="position:absolute;left:233.0px;top:412.1px;width:72.0px;height:15.2px;background:#ffffff;"></div>
<div style="position:absolute;left:305.0px;top:412.1px;width:72.0px;height:15.2px;background:#ffffff;"></div>
<div style="position:absolute;left:377.0px;top:412.1px;width:72.0px;height:15.2px;background:#ffffff;"></div>
<div style="position:absolute;left:449.0px;top:412.1px;width:72.0px;height:15.2px;background:#ffffff;"></div>
<div style="position:absolute;left:521.0px;top:412.1px;width:72.0px;height:15.2px;background:#ffffff;"></div>
<span style="position:absolute;left:-97.0px;width:300px;text-align:center;top:414.8px;font-size:10.5px;color:#3a3a6a;">SS</span>
<span style="position:absolute;left:-141.0px;width:300px;text-align:right;top:414.8px;font-size:10.5px;color:#222;">52</span>
<span style="position:absolute;left:-69.0px;width:300px;text-align:right;top:414.8px;font-size:10.5px;color:#222;">0.000</span>
<span style="position:absolute;left:3.0px;width:300px;text-align:right;top:414.8px;font-size:10.5px;color:#222;">195°36'06"</span>
<span style="position:absolute;left:75.0px;width:300px;text-align:right;top:414.8px;font-size:10.5px;color:#222;">87°37'59"</span>
<span style="position:absolute;left:147.0px;width:300px;text-align:right;top:414.8px;font-size:10.5px;color:#222;">86.585</span>
<span style="position:absolute;left:219.0px;width:300px;text-align:right;top:414.8px;font-size:10.5px;color:#222;">TGT</span>
<div style="position:absolute;left:0.0px;top:427.3px;width:17.0px;height:15.2px;background:#f0eef2;"></div>
<div style="position:absolute;left:17.0px;top:427.3px;width:72.0px;height:15.2px;background:#d4d4f8;"></div>
<div style="position:absolute;left:89.0px;top:427.3px;width:72.0px;height:15.2px;background:#ffffff;"></div>
<div style="position:absolute;left:161.0px;top:427.3px;width:72.0px;height:15.2px;background:#ffffff;"></div>
<div style="position:absolute;left:233.0px;top:427.3px;width:72.0px;height:15.2px;background:#ffffff;"></div>
<div style="position:absolute;left:305.0px;top:427.3px;width:72.0px;height:15.2px;background:#ffffff;"></div>
<div style="position:absolute;left:377.0px;top:427.3px;width:72.0px;height:15.2px;background:#ffffff;"></div>
<div style="position:absolute;left:449.0px;top:427.3px;width:72.0px;height:15.2px;background:#ffffff;"></div>
<div style="position:absolute;left:521.0px;top:427.3px;width:72.0px;height:15.2px;background:#ffffff;"></div>
<span style="position:absolute;left:-97.0px;width:300px;text-align:center;top:430.0px;font-size:10.5px;color:#3a3a6a;">SS</span>
<span style="position:absolute;left:-141.0px;width:300px;text-align:right;top:430.0px;font-size:10.5px;color:#222;">52</span>
<span style="position:absolute;left:-69.0px;width:300px;text-align:right;top:430.0px;font-size:10.5px;color:#222;">0.000</span>
<span style="position:absolute;left:3.0px;width:300px;text-align:right;top:430.0px;font-size:10.5px;color:#222;">15°35'49"</span>
<span style="position:absolute;left:75.0px;width:300px;text-align:right;top:430.0px;font-size:10.5px;color:#222;">272°21'56"</span>
<span style="position:absolute;left:147.0px;width:300px;text-align:right;top:430.0px;font-size:10.5px;color:#222;">86.586</span>
<span style="position:absolute;left:219.0px;width:300px;text-align:right;top:430.0px;font-size:10.5px;color:#222;">TGT</span>
<div style="position:absolute;left:0.0px;top:442.5px;width:17.0px;height:15.2px;background:#f0eef2;"></div>
<div style="position:absolute;left:17.0px;top:442.5px;width:72.0px;height:15.2px;background:#d4d4f8;"></div>
<div style="position:absolute;left:89.0px;top:442.5px;width:72.0px;height:15.2px;background:#ffffff;"></div>
<div style="position:absolute;left:161.0px;top:442.5px;width:72.0px;height:15.2px;background:#ffffff;"></div>
<div style="position:absolute;left:233.0px;top:442.5px;width:72.0px;height:15.2px;background:#ffffff;"></div>
<div style="position:absolute;left:305.0px;top:442.5px;width:72.0px;height:15.2px;background:#ffffff;"></div>
<div style="position:absolute;left:377.0px;top:442.5px;width:72.0px;height:15.2px;background:#ffffff;"></div>
<div style="position:absolute;left:449.0px;top:442.5px;width:72.0px;height:15.2px;background:#ffffff;"></div>
<div style="position:absolute;left:521.0px;top:442.5px;width:72.0px;height:15.2px;background:#ffffff;"></div>
<span style="position:absolute;left:-97.0px;width:300px;text-align:center;top:445.2px;font-size:10.5px;color:#3a3a6a;">SS</span>
<span style="position:absolute;left:-141.0px;width:300px;text-align:right;top:445.2px;font-size:10.5px;color:#222;">53</span>
<span style="position:absolute;left:-69.0px;width:300px;text-align:right;top:445.2px;font-size:10.5px;color:#222;">0.000</span>
<span style="position:absolute;left:3.0px;width:300px;text-align:right;top:445.2px;font-size:10.5px;color:#222;">195°26'59"</span>
<span style="position:absolute;left:75.0px;width:300px;text-align:right;top:445.2px;font-size:10.5px;color:#222;">88°41'14"</span>
<span style="position:absolute;left:147.0px;width:300px;text-align:right;top:445.2px;font-size:10.5px;color:#222;">86.505</span>
<span style="position:absolute;left:219.0px;width:300px;text-align:right;top:445.2px;font-size:10.5px;color:#222;">TGT</span>
<div style="position:absolute;left:0.0px;top:457.7px;width:17.0px;height:15.2px;background:#f0eef2;"></div>
<div style="position:absolute;left:17.0px;top:457.7px;width:72.0px;height:15.2px;background:#d4d4f8;"></div>
<div style="position:absolute;left:89.0px;top:457.7px;width:72.0px;height:15.2px;background:#ffffff;"></div>
<div style="position:absolute;left:161.0px;top:457.7px;width:72.0px;height:15.2px;background:#ffffff;"></div>
<div style="position:absolute;left:233.0px;top:457.7px;width:72.0px;height:15.2px;background:#ffffff;"></div>
<div style="position:absolute;left:305.0px;top:457.7px;width:72.0px;height:15.2px;background:#ffffff;"></div>
<div style="position:absolute;left:377.0px;top:457.7px;width:72.0px;height:15.2px;background:#ffffff;"></div>
<div style="position:absolute;left:449.0px;top:457.7px;width:72.0px;height:15.2px;background:#ffffff;"></div>
<div style="position:absolute;left:521.0px;top:457.7px;width:72.0px;height:15.2px;background:#ffffff;"></div>
<span style="position:absolute;left:-97.0px;width:300px;text-align:center;top:460.4px;font-size:10.5px;color:#3a3a6a;">SS</span>
<span style="position:absolute;left:-141.0px;width:300px;text-align:right;top:460.4px;font-size:10.5px;color:#222;">53</span>
<span style="position:absolute;left:-69.0px;width:300px;text-align:right;top:460.4px;font-size:10.5px;color:#222;">0.000</span>
<span style="position:absolute;left:3.0px;width:300px;text-align:right;top:460.4px;font-size:10.5px;color:#222;">15°26'41"</span>
<span style="position:absolute;left:75.0px;width:300px;text-align:right;top:460.4px;font-size:10.5px;color:#222;">271°18'41"</span>
<span style="position:absolute;left:147.0px;width:300px;text-align:right;top:460.4px;font-size:10.5px;color:#222;">86.506</span>
<span style="position:absolute;left:219.0px;width:300px;text-align:right;top:460.4px;font-size:10.5px;color:#222;">TGT</span>
<div style="position:absolute;left:0.0px;top:472.9px;width:17.0px;height:15.2px;background:#f0eef2;"></div>
<div style="position:absolute;left:17.0px;top:472.9px;width:72.0px;height:15.2px;background:#d4d4f8;"></div>
<div style="position:absolute;left:89.0px;top:472.9px;width:72.0px;height:15.2px;background:#ffffff;"></div>
<div style="position:absolute;left:161.0px;top:472.9px;width:72.0px;height:15.2px;background:#ffffff;"></div>
<div style="position:absolute;left:233.0px;top:472.9px;width:72.0px;height:15.2px;background:#ffffff;"></div>
<div style="position:absolute;left:305.0px;top:472.9px;width:72.0px;height:15.2px;background:#ffffff;"></div>
<div style="position:absolute;left:377.0px;top:472.9px;width:72.0px;height:15.2px;background:#ffffff;"></div>
<div style="position:absolute;left:449.0px;top:472.9px;width:72.0px;height:15.2px;background:#ffffff;"></div>
<div style="position:absolute;left:521.0px;top:472.9px;width:72.0px;height:15.2px;background:#ffffff;"></div>
<span style="position:absolute;left:-97.0px;width:300px;text-align:center;top:475.5px;font-size:10.5px;color:#3a3a6a;">SS</span>
<span style="position:absolute;left:-141.0px;width:300px;text-align:right;top:475.5px;font-size:10.5px;color:#222;">56</span>
<span style="position:absolute;left:-69.0px;width:300px;text-align:right;top:475.5px;font-size:10.5px;color:#222;">0.000</span>
<span style="position:absolute;left:3.0px;width:300px;text-align:right;top:475.5px;font-size:10.5px;color:#222;">200°46'40"</span>
<span style="position:absolute;left:75.0px;width:300px;text-align:right;top:475.5px;font-size:10.5px;color:#222;">88°09'44"</span>
<span style="position:absolute;left:147.0px;width:300px;text-align:right;top:475.5px;font-size:10.5px;color:#222;">69.750</span>
<span style="position:absolute;left:219.0px;width:300px;text-align:right;top:475.5px;font-size:10.5px;color:#222;">TGT</span>
<div style="position:absolute;left:0.0px;top:488.1px;width:17.0px;height:15.2px;background:#f0eef2;"></div>
<div style="position:absolute;left:17.0px;top:488.1px;width:72.0px;height:15.2px;background:#e4e4e4;"></div>
<div style="position:absolute;left:89.0px;top:488.1px;width:72.0px;height:15.2px;background:#ffffff;"></div>
<div style="position:absolute;left:161.0px;top:488.1px;width:72.0px;height:15.2px;background:#ffffff;"></div>
<div style="position:absolute;left:233.0px;top:488.1px;width:72.0px;height:15.2px;background:#ffffff;"></div>
<div style="position:absolute;left:305.0px;top:488.1px;width:72.0px;height:15.2px;background:#ffffff;"></div>
<div style="position:absolute;left:377.0px;top:488.1px;width:72.0px;height:15.2px;background:#ffffff;"></div>
<div style="position:absolute;left:449.0px;top:488.1px;width:72.0px;height:15.2px;background:#ffffff;"></div>
<div style="position:absolute;left:521.0px;top:488.1px;width:72.0px;height:15.2px;background:#ffffff;"></div>
<span style="position:absolute;left:-97.0px;width:300px;text-align:center;top:490.7px;font-size:10.5px;color:#333;">Note</span>
<span style="position:absolute;left:91.0px;top:490.7px;font-size:10.5px;color:#333;">Modified 12:18:07 PM 4/03/2024</span>
<div style="position:absolute;left:-0.5px;top:0.0px;width:1.0px;height:497.0px;background:#a4a4a4;"></div>
<div style="position:absolute;left:16.5px;top:0.0px;width:1.0px;height:497.0px;background:#a4a4a4;"></div>
<div style="position:absolute;left:88.5px;top:0.0px;width:1.0px;height:497.0px;background:#a4a4a4;"></div>
<div style="position:absolute;left:160.5px;top:0.0px;width:1.0px;height:497.0px;background:#a4a4a4;"></div>
<div style="position:absolute;left:232.5px;top:0.0px;width:1.0px;height:497.0px;background:#a4a4a4;"></div>
<div style="position:absolute;left:304.5px;top:0.0px;width:1.0px;height:497.0px;background:#a4a4a4;"></div>
<div style="position:absolute;left:376.5px;top:0.0px;width:1.0px;height:497.0px;background:#a4a4a4;"></div>
<div style="position:absolute;left:448.5px;top:0.0px;width:1.0px;height:497.0px;background:#a4a4a4;"></div>
<div style="position:absolute;left:520.5px;top:0.0px;width:1.0px;height:497.0px;background:#a4a4a4;"></div>
<div style="position:absolute;left:592.5px;top:0.0px;width:1.0px;height:497.0px;background:#a4a4a4;"></div>
<div style="position:absolute;left:0.0px;top:-0.5px;width:17.0px;height:1.0px;background:#707070;"></div>
<div style="position:absolute;left:17.0px;top:-0.6px;width:72.0px;height:1.3px;background:#2e2e2e;"></div>
<div style="position:absolute;left:89.0px;top:-0.5px;width:504.0px;height:1.0px;background:#a4a4a4;"></div>
<div style="position:absolute;left:0.0px;top:16.7px;width:17.0px;height:1.0px;background:#707070;"></div>
<div style="position:absolute;left:17.0px;top:16.6px;width:72.0px;height:1.3px;background:#2e2e2e;"></div>
<div style="position:absolute;left:89.0px;top:16.7px;width:504.0px;height:1.0px;background:#a4a4a4;"></div>
<div style="position:absolute;left:0.0px;top:31.9px;width:17.0px;height:1.0px;background:#707070;"></div>
<div style="position:absolute;left:17.0px;top:31.8px;width:72.0px;height:1.3px;background:#2e2e2e;"></div>
<div style="position:absolute;left:89.0px;top:31.9px;width:504.0px;height:1.0px;background:#a4a4a4;"></div>
<div style="position:absolute;left:0.0px;top:47.1px;width:17.0px;height:1.0px;background:#707070;"></div>
<div style="position:absolute;left:17.0px;top:47.0px;width:72.0px;height:1.3px;background:#2e2e2e;"></div>
<div style="position:absolute;left:89.0px;top:47.1px;width:504.0px;height:1.0px;background:#a4a4a4;"></div>
<div style="position:absolute;left:0.0px;top:62.3px;width:17.0px;height:1.0px;background:#707070;"></div>
<div style="position:absolute;left:17.0px;top:62.2px;width:72.0px;height:1.3px;background:#2e2e2e;"></div>
<div style="position:absolute;left:89.0px;top:62.3px;width:504.0px;height:1.0px;background:#a4a4a4;"></div>
<div style="position:absolute;left:0.0px;top:77.5px;width:17.0px;height:1.0px;background:#707070;"></div>
<div style="position:absolute;left:17.0px;top:77.4px;width:72.0px;height:1.3px;background:#2e2e2e;"></div>
<div style="position:absolute;left:89.0px;top:77.5px;width:504.0px;height:1.0px;background:#a4a4a4;"></div>
<div style="position:absolute;left:0.0px;top:92.6px;width:17.0px;height:1.0px;background:#707070;"></div>
<div style="position:absolute;left:17.0px;top:92.5px;width:72.0px;height:1.3px;background:#2e2e2e;"></div>
<div style="position:absolute;left:89.0px;top:92.6px;width:504.0px;height:1.0px;background:#a4a4a4;"></div>
<div style="position:absolute;left:0.0px;top:107.8px;width:17.0px;height:1.0px;background:#707070;"></div>
<div style="position:absolute;left:17.0px;top:107.7px;width:72.0px;height:1.3px;background:#2e2e2e;"></div>
<div style="position:absolute;left:89.0px;top:107.8px;width:504.0px;height:1.0px;background:#a4a4a4;"></div>
<div style="position:absolute;left:0.0px;top:123.0px;width:17.0px;height:1.0px;background:#707070;"></div>
<div style="position:absolute;left:17.0px;top:122.9px;width:72.0px;height:1.3px;background:#2e2e2e;"></div>
<div style="position:absolute;left:89.0px;top:123.0px;width:504.0px;height:1.0px;background:#a4a4a4;"></div>
<div style="position:absolute;left:0.0px;top:138.2px;width:17.0px;height:1.0px;background:#707070;"></div>
<div style="position:absolute;left:17.0px;top:138.1px;width:72.0px;height:1.3px;background:#2e2e2e;"></div>
<div style="position:absolute;left:89.0px;top:138.2px;width:504.0px;height:1.0px;background:#a4a4a4;"></div>
<div style="position:absolute;left:0.0px;top:153.4px;width:17.0px;height:1.0px;background:#707070;"></div>
<div style="position:absolute;left:17.0px;top:153.3px;width:72.0px;height:1.3px;background:#2e2e2e;"></div>
<div style="position:absolute;left:89.0px;top:153.4px;width:504.0px;height:1.0px;background:#a4a4a4;"></div>
<div style="position:absolute;left:0.0px;top:168.6px;width:17.0px;height:1.0px;background:#707070;"></div>
<div style="position:absolute;left:17.0px;top:168.5px;width:72.0px;height:1.3px;background:#2e2e2e;"></div>
<div style="position:absolute;left:89.0px;top:168.6px;width:504.0px;height:1.0px;background:#a4a4a4;"></div>
<div style="position:absolute;left:0.0px;top:183.8px;width:17.0px;height:1.0px;background:#707070;"></div>
<div style="position:absolute;left:17.0px;top:183.7px;width:72.0px;height:1.3px;background:#2e2e2e;"></div>
<div style="position:absolute;left:89.0px;top:183.8px;width:504.0px;height:1.0px;background:#a4a4a4;"></div>
<div style="position:absolute;left:0.0px;top:199.0px;width:17.0px;height:1.0px;background:#707070;"></div>
<div style="position:absolute;left:17.0px;top:198.9px;width:72.0px;height:1.3px;background:#2e2e2e;"></div>
<div style="position:absolute;left:89.0px;top:199.0px;width:504.0px;height:1.0px;background:#a4a4a4;"></div>
<div style="position:absolute;left:0.0px;top:214.2px;width:17.0px;height:1.0px;background:#707070;"></div>
<div style="position:absolute;left:17.0px;top:214.1px;width:72.0px;height:1.3px;background:#2e2e2e;"></div>
<div style="position:absolute;left:89.0px;top:214.2px;width:504.0px;height:1.0px;background:#a4a4a4;"></div>
<div style="position:absolute;left:0.0px;top:229.4px;width:17.0px;height:1.0px;background:#707070;"></div>
<div style="position:absolute;left:17.0px;top:229.3px;width:72.0px;height:1.3px;background:#2e2e2e;"></div>
<div style="position:absolute;left:89.0px;top:229.4px;width:504.0px;height:1.0px;background:#a4a4a4;"></div>
<div style="position:absolute;left:0.0px;top:244.5px;width:17.0px;height:1.0px;background:#707070;"></div>
<div style="position:absolute;left:17.0px;top:244.4px;width:72.0px;height:1.3px;background:#2e2e2e;"></div>
<div style="position:absolute;left:89.0px;top:244.5px;width:504.0px;height:1.0px;background:#a4a4a4;"></div>
<div style="position:absolute;left:0.0px;top:259.7px;width:17.0px;height:1.0px;background:#707070;"></div>
<div style="position:absolute;left:17.0px;top:259.6px;width:72.0px;height:1.3px;background:#2e2e2e;"></div>
<div style="position:absolute;left:89.0px;top:259.7px;width:504.0px;height:1.0px;background:#a4a4a4;"></div>
<div style="position:absolute;left:0.0px;top:274.9px;width:17.0px;height:1.0px;background:#707070;"></div>
<div style="position:absolute;left:17.0px;top:274.8px;width:72.0px;height:1.3px;background:#2e2e2e;"></div>
<div style="position:absolute;left:89.0px;top:274.9px;width:504.0px;height:1.0px;background:#a4a4a4;"></div>
<div style="position:absolute;left:0.0px;top:290.1px;width:17.0px;height:1.0px;background:#707070;"></div>
<div style="position:absolute;left:17.0px;top:290.0px;width:72.0px;height:1.3px;background:#2e2e2e;"></div>
<div style="position:absolute;left:89.0px;top:290.1px;width:504.0px;height:1.0px;background:#a4a4a4;"></div>
<div style="position:absolute;left:0.0px;top:305.3px;width:17.0px;height:1.0px;background:#707070;"></div>
<div style="position:absolute;left:17.0px;top:305.2px;width:72.0px;height:1.3px;background:#2e2e2e;"></div>
<div style="position:absolute;left:89.0px;top:305.3px;width:504.0px;height:1.0px;background:#a4a4a4;"></div>
<div style="position:absolute;left:0.0px;top:320.5px;width:17.0px;height:1.0px;background:#707070;"></div>
<div style="position:absolute;left:17.0px;top:320.4px;width:72.0px;height:1.3px;background:#2e2e2e;"></div>
<div style="position:absolute;left:89.0px;top:320.5px;width:504.0px;height:1.0px;background:#a4a4a4;"></div>
<div style="position:absolute;left:0.0px;top:335.7px;width:17.0px;height:1.0px;background:#707070;"></div>
<div style="position:absolute;left:17.0px;top:335.6px;width:72.0px;height:1.3px;background:#2e2e2e;"></div>
<div style="position:absolute;left:89.0px;top:335.7px;width:504.0px;height:1.0px;background:#a4a4a4;"></div>
<div style="position:absolute;left:0.0px;top:350.9px;width:17.0px;height:1.0px;background:#707070;"></div>
<div style="position:absolute;left:17.0px;top:350.8px;width:72.0px;height:1.3px;background:#2e2e2e;"></div>
<div style="position:absolute;left:89.0px;top:350.9px;width:504.0px;height:1.0px;background:#a4a4a4;"></div>
<div style="position:absolute;left:0.0px;top:366.1px;width:17.0px;height:1.0px;background:#707070;"></div>
<div style="position:absolute;left:17.0px;top:366.0px;width:72.0px;height:1.3px;background:#2e2e2e;"></div>
<div style="position:absolute;left:89.0px;top:366.1px;width:504.0px;height:1.0px;background:#a4a4a4;"></div>
<div style="position:absolute;left:0.0px;top:381.3px;width:17.0px;height:1.0px;background:#707070;"></div>
<div style="position:absolute;left:17.0px;top:381.2px;width:72.0px;height:1.3px;background:#2e2e2e;"></div>
<div style="position:absolute;left:89.0px;top:381.3px;width:504.0px;height:1.0px;background:#a4a4a4;"></div>
<div style="position:absolute;left:0.0px;top:396.5px;width:17.0px;height:1.0px;background:#707070;"></div>
<div style="position:absolute;left:17.0px;top:396.4px;width:72.0px;height:1.3px;background:#2e2e2e;"></div>
<div style="position:absolute;left:89.0px;top:396.5px;width:504.0px;height:1.0px;background:#a4a4a4;"></div>
<div style="position:absolute;left:0.0px;top:411.6px;width:17.0px;height:1.0px;background:#707070;"></div>
<div style="position:absolute;left:17.0px;top:411.5px;width:72.0px;height:1.3px;background:#2e2e2e;"></div>
<div style="position:absolute;left:89.0px;top:411.6px;width:504.0px;height:1.0px;background:#a4a4a4;"></div>
<div style="position:absolute;left:0.0px;top:426.8px;width:17.0px;height:1.0px;background:#707070;"></div>
<div style="position:absolute;left:17.0px;top:426.7px;width:72.0px;height:1.3px;background:#2e2e2e;"></div>
<div style="position:absolute;left:89.0px;top:426.8px;width:504.0px;height:1.0px;background:#a4a4a4;"></div>
<div style="position:absolute;left:0.0px;top:442.0px;width:17.0px;height:1.0px;background:#707070;"></div>
<div style="position:absolute;left:17.0px;top:441.9px;width:72.0px;height:1.3px;background:#2e2e2e;"></div>
<div style="position:absolute;left:89.0px;top:442.0px;width:504.0px;height:1.0px;background:#a4a4a4;"></div>
<div style="position:absolute;left:0.0px;top:457.2px;width:17.0px;height:1.0px;background:#707070;"></div>
<div style="position:absolute;left:17.0px;top:457.1px;width:72.0px;height:1.3px;background:#2e2e2e;"></div>
<div style="position:absolute;left:89.0px;top:457.2px;width:504.0px;height:1.0px;background:#a4a4a4;"></div>
<div style="position:absolute;left:0.0px;top:472.4px;width:17.0px;height:1.0px;background:#707070;"></div>
<div style="position:absolute;left:17.0px;top:472.3px;width:72.0px;height:1.3px;background:#2e2e2e;"></div>
<div style="position:absolute;left:89.0px;top:472.4px;width:504.0px;height:1.0px;background:#a4a4a4;"></div>
<div style="position:absolute;left:0.0px;top:487.6px;width:17.0px;height:1.0px;background:#707070;"></div>
<div style="position:absolute;left:17.0px;top:487.5px;width:72.0px;height:1.3px;background:#2e2e2e;"></div>
<div style="position:absolute;left:89.0px;top:487.6px;width:504.0px;height:1.0px;background:#a4a4a4;"></div>
<div style="position:absolute;left:0.0px;top:502.8px;width:17.0px;height:1.0px;background:#707070;"></div>
<div style="position:absolute;left:17.0px;top:502.7px;width:72.0px;height:1.3px;background:#2e2e2e;"></div>
<div style="position:absolute;left:89.0px;top:502.8px;width:504.0px;height:1.0px;background:#a4a4a4;"></div>
<div style="position:absolute;left:16.5px;top:0.0px;width:1.2px;height:497.0px;background:#2e2e2e;"></div>
<div style="position:absolute;left:0.0px;top:16.4px;width:593.0px;height:1.5px;background:#2e2e2e;"></div>
<div style="position:absolute;left:88.4px;top:0.0px;width:1.2px;height:17.2px;background:#4a4a4a;"></div>
<div style="position:absolute;left:160.4px;top:0.0px;width:1.2px;height:17.2px;background:#4a4a4a;"></div>
<div style="position:absolute;left:232.4px;top:0.0px;width:1.2px;height:17.2px;background:#4a4a4a;"></div>
<div style="position:absolute;left:304.4px;top:0.0px;width:1.2px;height:17.2px;background:#4a4a4a;"></div>
<div style="position:absolute;left:376.4px;top:0.0px;width:1.2px;height:17.2px;background:#4a4a4a;"></div>
<div style="position:absolute;left:448.4px;top:0.0px;width:1.2px;height:17.2px;background:#4a4a4a;"></div>
<div style="position:absolute;left:520.4px;top:0.0px;width:1.2px;height:17.2px;background:#4a4a4a;"></div>
<div style="position:absolute;left:592.4px;top:0.0px;width:1.2px;height:17.2px;background:#4a4a4a;"></div>
<div style="position:absolute;left:0.0px;top:320.2px;width:593.0px;height:1.5px;background:#2e2e2e;"></div>
<div style="position:absolute;left:88.4px;top:305.8px;width:1.2px;height:15.2px;background:#2e2e2e;"></div>
<div style="position:absolute;left:160.4px;top:305.8px;width:1.2px;height:15.2px;background:#2e2e2e;"></div>
<div style="position:absolute;left:232.4px;top:305.8px;width:1.2px;height:15.2px;background:#2e2e2e;"></div>
<div style="position:absolute;left:304.4px;top:305.8px;width:1.2px;height:15.2px;background:#2e2e2e;"></div>
<div style="position:absolute;left:376.4px;top:305.8px;width:1.2px;height:15.2px;background:#2e2e2e;"></div>
<div style="position:absolute;left:448.4px;top:305.8px;width:1.2px;height:15.2px;background:#2e2e2e;"></div>
<div style="position:absolute;left:520.4px;top:305.8px;width:1.2px;height:15.2px;background:#2e2e2e;"></div>
<div style="position:absolute;left:592.4px;top:305.8px;width:1.2px;height:15.2px;background:#2e2e2e;"></div>
<div style="position:absolute;left:0.0px;top:31.6px;width:593.0px;height:1.4px;background:#555;"></div>
<div style="position:absolute;left:521.0px;top:46.8px;width:72.0px;height:1.5px;background:#2e2e2e;"></div>
<div style="position:absolute;left:592.0px;top:32.4px;width:1.3px;height:15.2px;background:#2e2e2e;"></div>
<div style="position:absolute;left:521.0px;top:122.7px;width:72.0px;height:1.5px;background:#2e2e2e;"></div>
<div style="position:absolute;left:592.0px;top:108.3px;width:1.3px;height:15.2px;background:#2e2e2e;"></div>
<div style="position:absolute;left:521.0px;top:198.7px;width:72.0px;height:1.5px;background:#2e2e2e;"></div>
<div style="position:absolute;left:592.0px;top:184.3px;width:1.3px;height:15.2px;background:#2e2e2e;"></div>
<div style="position:absolute;left:521.0px;top:289.8px;width:72.0px;height:1.5px;background:#2e2e2e;"></div>
<div style="position:absolute;left:592.0px;top:275.4px;width:1.3px;height:15.2px;background:#2e2e2e;"></div>
<div style="position:absolute;left:88.2px;top:321.0px;width:1.4px;height:15.2px;background:#2e2e2e;"></div>
<div style="position:absolute;left:88.2px;top:336.2px;width:1.4px;height:15.2px;background:#2e2e2e;"></div>
<div style="position:absolute;left:88.2px;top:351.4px;width:1.4px;height:15.2px;background:#2e2e2e;"></div>
<div style="position:absolute;left:88.2px;top:366.6px;width:1.4px;height:15.2px;background:#2e2e2e;"></div>
<div style="position:absolute;left:88.2px;top:381.8px;width:1.4px;height:15.2px;background:#2e2e2e;"></div>
<div style="position:absolute;left:88.2px;top:397.0px;width:1.4px;height:15.2px;background:#2e2e2e;"></div>
<div style="position:absolute;left:88.2px;top:412.1px;width:1.4px;height:15.2px;background:#2e2e2e;"></div>
<div style="position:absolute;left:88.2px;top:427.3px;width:1.4px;height:15.2px;background:#2e2e2e;"></div>
<div style="position:absolute;left:88.2px;top:442.5px;width:1.4px;height:15.2px;background:#2e2e2e;"></div>
<div style="position:absolute;left:88.2px;top:457.7px;width:1.4px;height:15.2px;background:#2e2e2e;"></div>
<div style="position:absolute;left:88.2px;top:472.9px;width:1.4px;height:15.2px;background:#2e2e2e;"></div>
<div style="position:absolute;left:0.0px;top:289.8px;width:593.0px;height:1.5px;background:#2e2e2e;"></div>
<div style="position:absolute;left:90.0px;top:488.9px;width:502.0px;height:14.0px;background:#ffffff;"></div>
<span style="position:absolute;left:91.0px;top:490.8px;font-size:10.5px;color:#333;">Modified 12:18:07 PM 4/03/2024</span>
<div style="position:absolute;left:593.5px;top:0.0px;width:231.0px;height:497.0px;background:#f0eff3;"></div>
<div style="position:absolute;left:824.0px;top:0.0px;width:18.0px;height:497.0px;background:#f0f0f0;"></div>
<div style="position:absolute;left:825.0px;top:18.0px;width:15.0px;height:24.0px;background:#cdcdcd;"></div>
</div>
<svg style="left:1283px;top:273px" width="11" height="8" viewBox="0 0 11 8"><path d="M1.5 6 L5.5 2 L9.5 6" fill="none" stroke="#555" stroke-width="1.3"/></svg>
<div style="left:456px;top:268px;width:843px;height:1px;background:#888;"></div>
<div style="left:510px;top:302px;width:516px;height:257px;background:#f0eff4;border:1px solid #9c9c9c;box-shadow:0 0 3px rgba(0,0,0,0.15);"></div>
<div style="left:511px;top:303px;width:514px;height:30px;background:#ffffff;"></div>
<span style="left:517px;top:312.0px;font-size:12px;color:#1e1e1e;">Multiple Shots Listing</span>
<svg style="left:1002px;top:312px" width="12" height="12" viewBox="0 0 12 12"><path d="M0.5 0.5 L11.5 11.5 M11.5 0.5 L0.5 11.5" stroke="#333" stroke-width="1.1"/></svg>
<span style="left:522px;top:345.8px;font-size:10.5px;color:#2a2a2a;">From Setup</span>
<div style="left:587px;top:344px;width:79px;height:22px;background:#f0eff4;border:1px solid #adadad;"></div>
<span style="left:263px;width:400px;text-align:right;top:348.2px;font-size:10.5px;color:#2a2a2a;">6000</span>
<svg style="left:521px;top:376px" width="14" height="14" viewBox="0 0 14 14"><circle cx="7" cy="7" r="6" fill="#f6f6f6" stroke="#444" stroke-width="1"/><circle cx="7" cy="7" r="3.3" fill="#222"/></svg>
<span style="left:537px;top:377.8px;font-size:10.5px;color:#2a2a2a;">Average All Shots Listed</span>
<svg style="left:521px;top:395px" width="14" height="14" viewBox="0 0 14 14"><circle cx="7" cy="7" r="6" fill="#fbfbfb" stroke="#9a9a9a" stroke-width="1"/></svg>
<span style="left:537px;top:396.5px;font-size:11px;color:#2a2a2a;transform:scaleX(0.957);transform-origin:0 0;">Choose the shots you want to average. Or you can select Single Shot.</span>
<span style="left:551px;top:417.8px;font-size:10.5px;color:#2a2a2a;">Num</span>
<span style="left:592px;top:417.8px;font-size:10.5px;color:#2a2a2a;">Hz Ang</span>
<span style="left:693px;top:417.8px;font-size:10.5px;color:#2a2a2a;">Dist</span>
<span style="left:745px;top:417.8px;font-size:10.5px;color:#2a2a2a;">Vt Ang</span>
<span style="left:836px;top:417.8px;font-size:10.5px;color:#2a2a2a;">Tag. Ht</span>
<span style="left:904px;top:417.8px;font-size:10.5px;color:#2a2a2a;">Description</span>
<div style="left:536px;top:434px;width:466px;height:65px;background:#ffffff;border:1px solid #a8a8a8;"></div>
<span style="left:553px;top:437.2px;font-size:10px;color:#7a7a7a;">50</span>
<span style="left:588px;top:437.2px;font-size:10px;color:#7a7a7a;">15°35'52"</span>
<span style="left:640px;top:437.2px;font-size:10px;color:#7a7a7a;">86.59</span>
<span style="left:689px;top:437.2px;font-size:10px;color:#7a7a7a;">272°21'56"</span>
<span style="left:787px;top:437.2px;font-size:10px;color:#7a7a7a;">0.00</span>
<span style="left:840px;top:437.2px;font-size:10px;color:#7a7a7a;">TGT</span>
<span style="left:553px;top:449.8px;font-size:10px;color:#7a7a7a;">50</span>
<span style="left:586px;top:449.8px;font-size:10px;color:#7a7a7a;">192°52'15"</span>
<span style="left:686.5px;top:449.8px;font-size:10px;color:#7a7a7a;">101.33</span>
<span style="left:739.7px;top:449.8px;font-size:10px;color:#7a7a7a;">87°22'37"</span>
<span style="left:835px;top:449.8px;font-size:10px;color:#7a7a7a;">0.00</span>
<span style="left:888px;top:449.8px;font-size:10px;color:#7a7a7a;">TGT</span>
<span style="left:553px;top:462.3px;font-size:10px;color:#7a7a7a;">50</span>
<span style="left:588px;top:462.3px;font-size:10px;color:#7a7a7a;">12°51'29"</span>
<span style="left:638.5px;top:462.3px;font-size:10px;color:#7a7a7a;">101.33</span>
<span style="left:689px;top:462.3px;font-size:10px;color:#7a7a7a;">272°36'54"</span>
<span style="left:787px;top:462.3px;font-size:10px;color:#7a7a7a;">0.00</span>
<span style="left:840px;top:462.3px;font-size:10px;color:#7a7a7a;">TGT</span>
<span style="left:553px;top:474.8px;font-size:10px;color:#7a7a7a;">50</span>
<span style="left:586px;top:474.8px;font-size:10px;color:#7a7a7a;">192°51'44"</span>
<span style="left:686.5px;top:474.8px;font-size:10px;color:#7a7a7a;">101.33</span>
<span style="left:739.7px;top:474.8px;font-size:10px;color:#7a7a7a;">87°22'55"</span>
<span style="left:835px;top:474.8px;font-size:10px;color:#7a7a7a;">0.00</span>
<span style="left:888px;top:474.8px;font-size:10px;color:#7a7a7a;">TGT</span>
<span style="left:534px;top:503.5px;font-size:11px;color:#2a2a2a;transform:scaleX(0.934);transform-origin:0 0;">(Note: The First Shot in the list is the Last Shot to this point)</span>
<div style="left:641px;top:526px;width:78px;height:20px;background:#e1e1e1;border:2px solid #2b6fcf;"></div>
<span style="left:480px;width:400px;text-align:center;top:530.8px;font-size:10.5px;color:#222;">OK</span>
<div style="left:727px;top:526px;width:78px;height:20px;background:#cccccc;border:1px solid #c4c4c4;"></div>
<span style="left:566px;width:400px;text-align:center;top:530.8px;font-size:10.5px;color:#a8a8a8;">Cancel</span>
<div style="left:814px;top:526px;width:78px;height:20px;background:#e1e1e1;border:1px solid #adadad;"></div>
<span style="left:653px;width:400px;text-align:center;top:530.8px;font-size:10.5px;color:#222;">Help</span>
<svg style="left:530px;top:398px" width="26" height="36" viewBox="0 0 26 36"><path d="M2 2 L2 28 L8.5 22 L13 32 L17.5 30 L13 20.5 L22 20.5 Z" fill="#fff" stroke="#111" stroke-width="2" stroke-linejoin="round"/></svg>
<div style="left:1369px;top:219px;width:119px;height:198px;background:#f0eff3;border:1px solid #d8d8d8;"></div>
<div style="left:1370px;top:220px;width:117px;height:30px;background:#fcfcfc;"></div>
<span style="left:1377px;top:228.5px;font-size:12px;color:#b0b0b0;">Hot Toggles!</span>
<div style="left:1467px;top:226px;width:19px;height:19px;background:#dcdcdc;"></div>
<svg style="left:1373px;top:252.5px" width="13" height="13" viewBox="0 0 13 13"><rect x="0.5" y="0.5" width="12" height="12" fill="#f6f6f6" stroke="#555"/><path d="M3 6.5 L5.5 9 L10 3.5" fill="none" stroke="#555" stroke-width="1.3"/></svg>
<span style="left:1388.5px;top:253.8px;font-size:10.3px;color:#262626;">Point Protection</span>
<svg style="left:1373px;top:266.9px" width="13" height="13" viewBox="0 0 13 13"><rect x="0.5" y="0.5" width="12" height="12" fill="#f6f6f6" stroke="#555"/><path d="M3 6.5 L5.5 9 L10 3.5" fill="none" stroke="#555" stroke-width="1.3"/></svg>
<span style="left:1388.5px;top:268.2px;font-size:10.3px;color:#262626;">Log File Output</span>
<svg style="left:1373px;top:281.3px" width="13" height="13" viewBox="0 0 13 13"><rect x="0.5" y="0.5" width="12" height="12" fill="#f6f6f6" stroke="#555"/></svg>
<span style="left:1388.5px;top:282.7px;font-size:10.3px;color:#262626;">Input scale</span>
<svg style="left:1373px;top:295.7px" width="13" height="13" viewBox="0 0 13 13"><rect x="0.5" y="0.5" width="12" height="12" fill="#f6f6f6" stroke="#555"/></svg>
<span style="left:1388.5px;top:297.1px;font-size:10.3px;color:#262626;">Output scale</span>
<svg style="left:1373px;top:310.1px" width="13" height="13" viewBox="0 0 13 13"><rect x="0.5" y="0.5" width="12" height="12" fill="#f6f6f6" stroke="#555"/><path d="M3 6.5 L5.5 9 L10 3.5" fill="none" stroke="#555" stroke-width="1.3"/></svg>
<span style="left:1388.5px;top:311.5px;font-size:10.3px;color:#262626;">Draw lines/curves</span>
<svg style="left:1373px;top:324.5px" width="13" height="13" viewBox="0 0 13 13"><rect x="0.5" y="0.5" width="12" height="12" fill="#f6f6f6" stroke="#555"/></svg>
<span style="left:1388.5px;top:325.9px;font-size:10.3px;color:#262626;">Draw distances</span>
<svg style="left:1373px;top:338.9px" width="13" height="13" viewBox="0 0 13 13"><rect x="0.5" y="0.5" width="12" height="12" fill="#f6f6f6" stroke="#555"/></svg>
<span style="left:1388.5px;top:340.2px;font-size:10.3px;color:#262626;">Draw bearings</span>
<span style="left:1377px;top:359.2px;font-size:10.3px;color:#262626;">Next pt:</span>
<div style="left:1419px;top:355px;width:66px;height:18px;background:#ffffff;border:1px solid #8a8a8a;"></div>
<span style="left:1422px;top:359.2px;font-size:10.3px;color:#262626;">1</span>
<span style="left:1382px;top:379.9px;font-size:10.3px;color:#262626;">Low pt:</span>
<div style="left:1419px;top:375px;width:66px;height:19px;background:#f4f4f4;border:1px solid #b0b0b0;"></div>
<span style="left:1422px;top:379.9px;font-size:10.3px;color:#262626;">1</span>
<div style="left:1385px;top:398px;width:85px;height:15px;background:#e1e1e1;border:1px solid #c8c8c8;"></div>
<span style="left:1227px;width:400px;text-align:center;top:400.4px;font-size:10.3px;color:#262626;">Refresh</span>
<div style="left:1049px;top:761px;width:250px;height:6px;background:#fcfcfc;"></div>
<svg style="left:1160px;top:519px" width="287" height="242" viewBox="0 0 287 242"><defs>
<linearGradient id="bgv" x1="0" y1="0" x2="1" y2="0.3"><stop offset="0" stop-color="#d2c1ae"/><stop offset="0.45" stop-color="#dacdbf"/><stop offset="1" stop-color="#ddd2c6"/></linearGradient>
<linearGradient id="hairg" x1="0" y1="0" x2="0" y2="1"><stop offset="0" stop-color="#573829"/><stop offset="0.5" stop-color="#6a4431"/><stop offset="1" stop-color="#8d5c3c"/></linearGradient>
<linearGradient id="hair2" x1="0" y1="0" x2="0" y2="1"><stop offset="0" stop-color="#5e3c2c"/><stop offset="0.4" stop-color="#74492f"/><stop offset="1" stop-color="#a56e44"/></linearGradient>
<radialGradient id="skin" cx="0.45" cy="0.4" r="0.65"><stop offset="0" stop-color="#f0cbbb"/><stop offset="0.7" stop-color="#e6b9a6"/><stop offset="1" stop-color="#d39f8a"/></radialGradient>
<linearGradient id="neck" x1="0" y1="0" x2="0" y2="1"><stop offset="0" stop-color="#cf9f8c"/><stop offset="0.3" stop-color="#e3b7a4"/><stop offset="1" stop-color="#e8bea9"/></linearGradient>
<linearGradient id="shirt" x1="0" y1="0" x2="0" y2="1"><stop offset="0" stop-color="#3243b8"/><stop offset="1" stop-color="#2534a0"/></linearGradient>
<filter id="bl" x="-10%" y="-10%" width="120%" height="120%"><feGaussianBlur stdDeviation="1.3"/></filter>
</defs>
<rect width="287" height="242" fill="url(#bgv)"/>
<g filter="url(#bl)">
<path d="M134 13 C120 14 110 20 104 28 C96 40 92 52 90 62 C85 80 82 100 81 125 C80 140 80 155 82 162 L108 148 L160 150 C165 175 163 210 164 242 L205 242 C204 215 203 185 201 155 C200 130 200 100 196 80 C192 60 186 45 176 32 C165 20 150 12 134 13 Z" fill="url(#hairg)"/>
<path d="M108 149 C106 149 104 150 100 152 L82 158 C70 162 58 168 50 176 C40 188 36 205 34 242 L270 242 C266 215 260 195 250 185 C240 172 225 163 202 152 L160 150 L140 150 Z" fill="url(#shirt)"/>
<path d="M106 132 C106 140 107 148 108 153 C110 175 112 200 116 233 C125 220 140 200 158 181 C162 170 163 160 163 150 C160 140 158 132 156 128 L130 140 Z" fill="url(#neck)"/>
<path d="M131 30 C118 31 108 36 102 44 C97 55 95 68 96 82 C96 100 98 115 104 125 C110 135 120 142 134 143 C146 142 153 136 158 128 C163 118 165 102 164 88 C163 70 161 55 157 46 C150 36 142 30 131 30 Z" fill="url(#skin)"/>
<path d="M131 28 C145 26 157 34 162 48 C166 62 168 85 165 110 C163 128 158 140 158 148 L176 150 C184 125 186 95 182 70 C178 50 168 32 150 24 Z" fill="#5e3c2c"/>
<path d="M164 92 C163 112 158 126 154 134 C157 160 160 195 163 242 L205 242 C204 210 202 180 199 150 C197 125 192 105 182 92 Z" fill="url(#hair2)"/>
<path d="M104 40 C98 60 94 85 94 110 C94 125 98 140 104 150 L88 152 C84 130 84 100 88 75 C91 58 96 46 104 40 Z" fill="#5a3a2a"/>
</g>
<g filter="url(#bl)" opacity="0.9">
<ellipse cx="111" cy="72" rx="6" ry="2.6" fill="#7d6a68"/><ellipse cx="148" cy="75" rx="6" ry="2.6" fill="#7d6a68"/>
<path d="M101 62 Q110 58 120 61 M139 63 Q148 61 158 65" stroke="#8a5a48" stroke-width="2" fill="none"/>
<path d="M124 96 Q128 99 133 96" stroke="#b07e6e" stroke-width="2" fill="none"/>
<path d="M112 110 Q126 106 142 110 Q128 120 112 110 Z" fill="#b06e66"/>
<path d="M115 110 Q127 108 139 110 Q127 114 115 110 Z" fill="#f6e6de"/>
</g>
<path d="M74 160 L98 153 L92 168 Z" fill="#2a3aa6" opacity="0.6"/>
<text x="150" y="218.5" font-size="7.5" fill="#e8ecff" font-family="Liberation Sans" font-weight="bold">/ Ms</text>
</svg>
<svg style="left:1423px;top:739px" width="64" height="64" viewBox="0 0 64 64"><circle cx="32" cy="32" r="31" fill="#9b9aa0"/><circle cx="56.0" cy="32.0" r="1.3" fill="#5a5a60"/><circle cx="49.0" cy="49.0" r="1.3" fill="#5a5a60"/><circle cx="32.0" cy="56.0" r="1.3" fill="#5a5a60"/><circle cx="15.0" cy="49.0" r="1.3" fill="#5a5a60"/><circle cx="8.0" cy="32.0" r="1.3" fill="#5a5a60"/><circle cx="15.0" cy="15.1" r="1.3" fill="#5a5a60"/><circle cx="31.9" cy="8.0" r="1.3" fill="#5a5a60"/><circle cx="48.9" cy="15.0" r="1.3" fill="#5a5a60"/></svg></body></html>
